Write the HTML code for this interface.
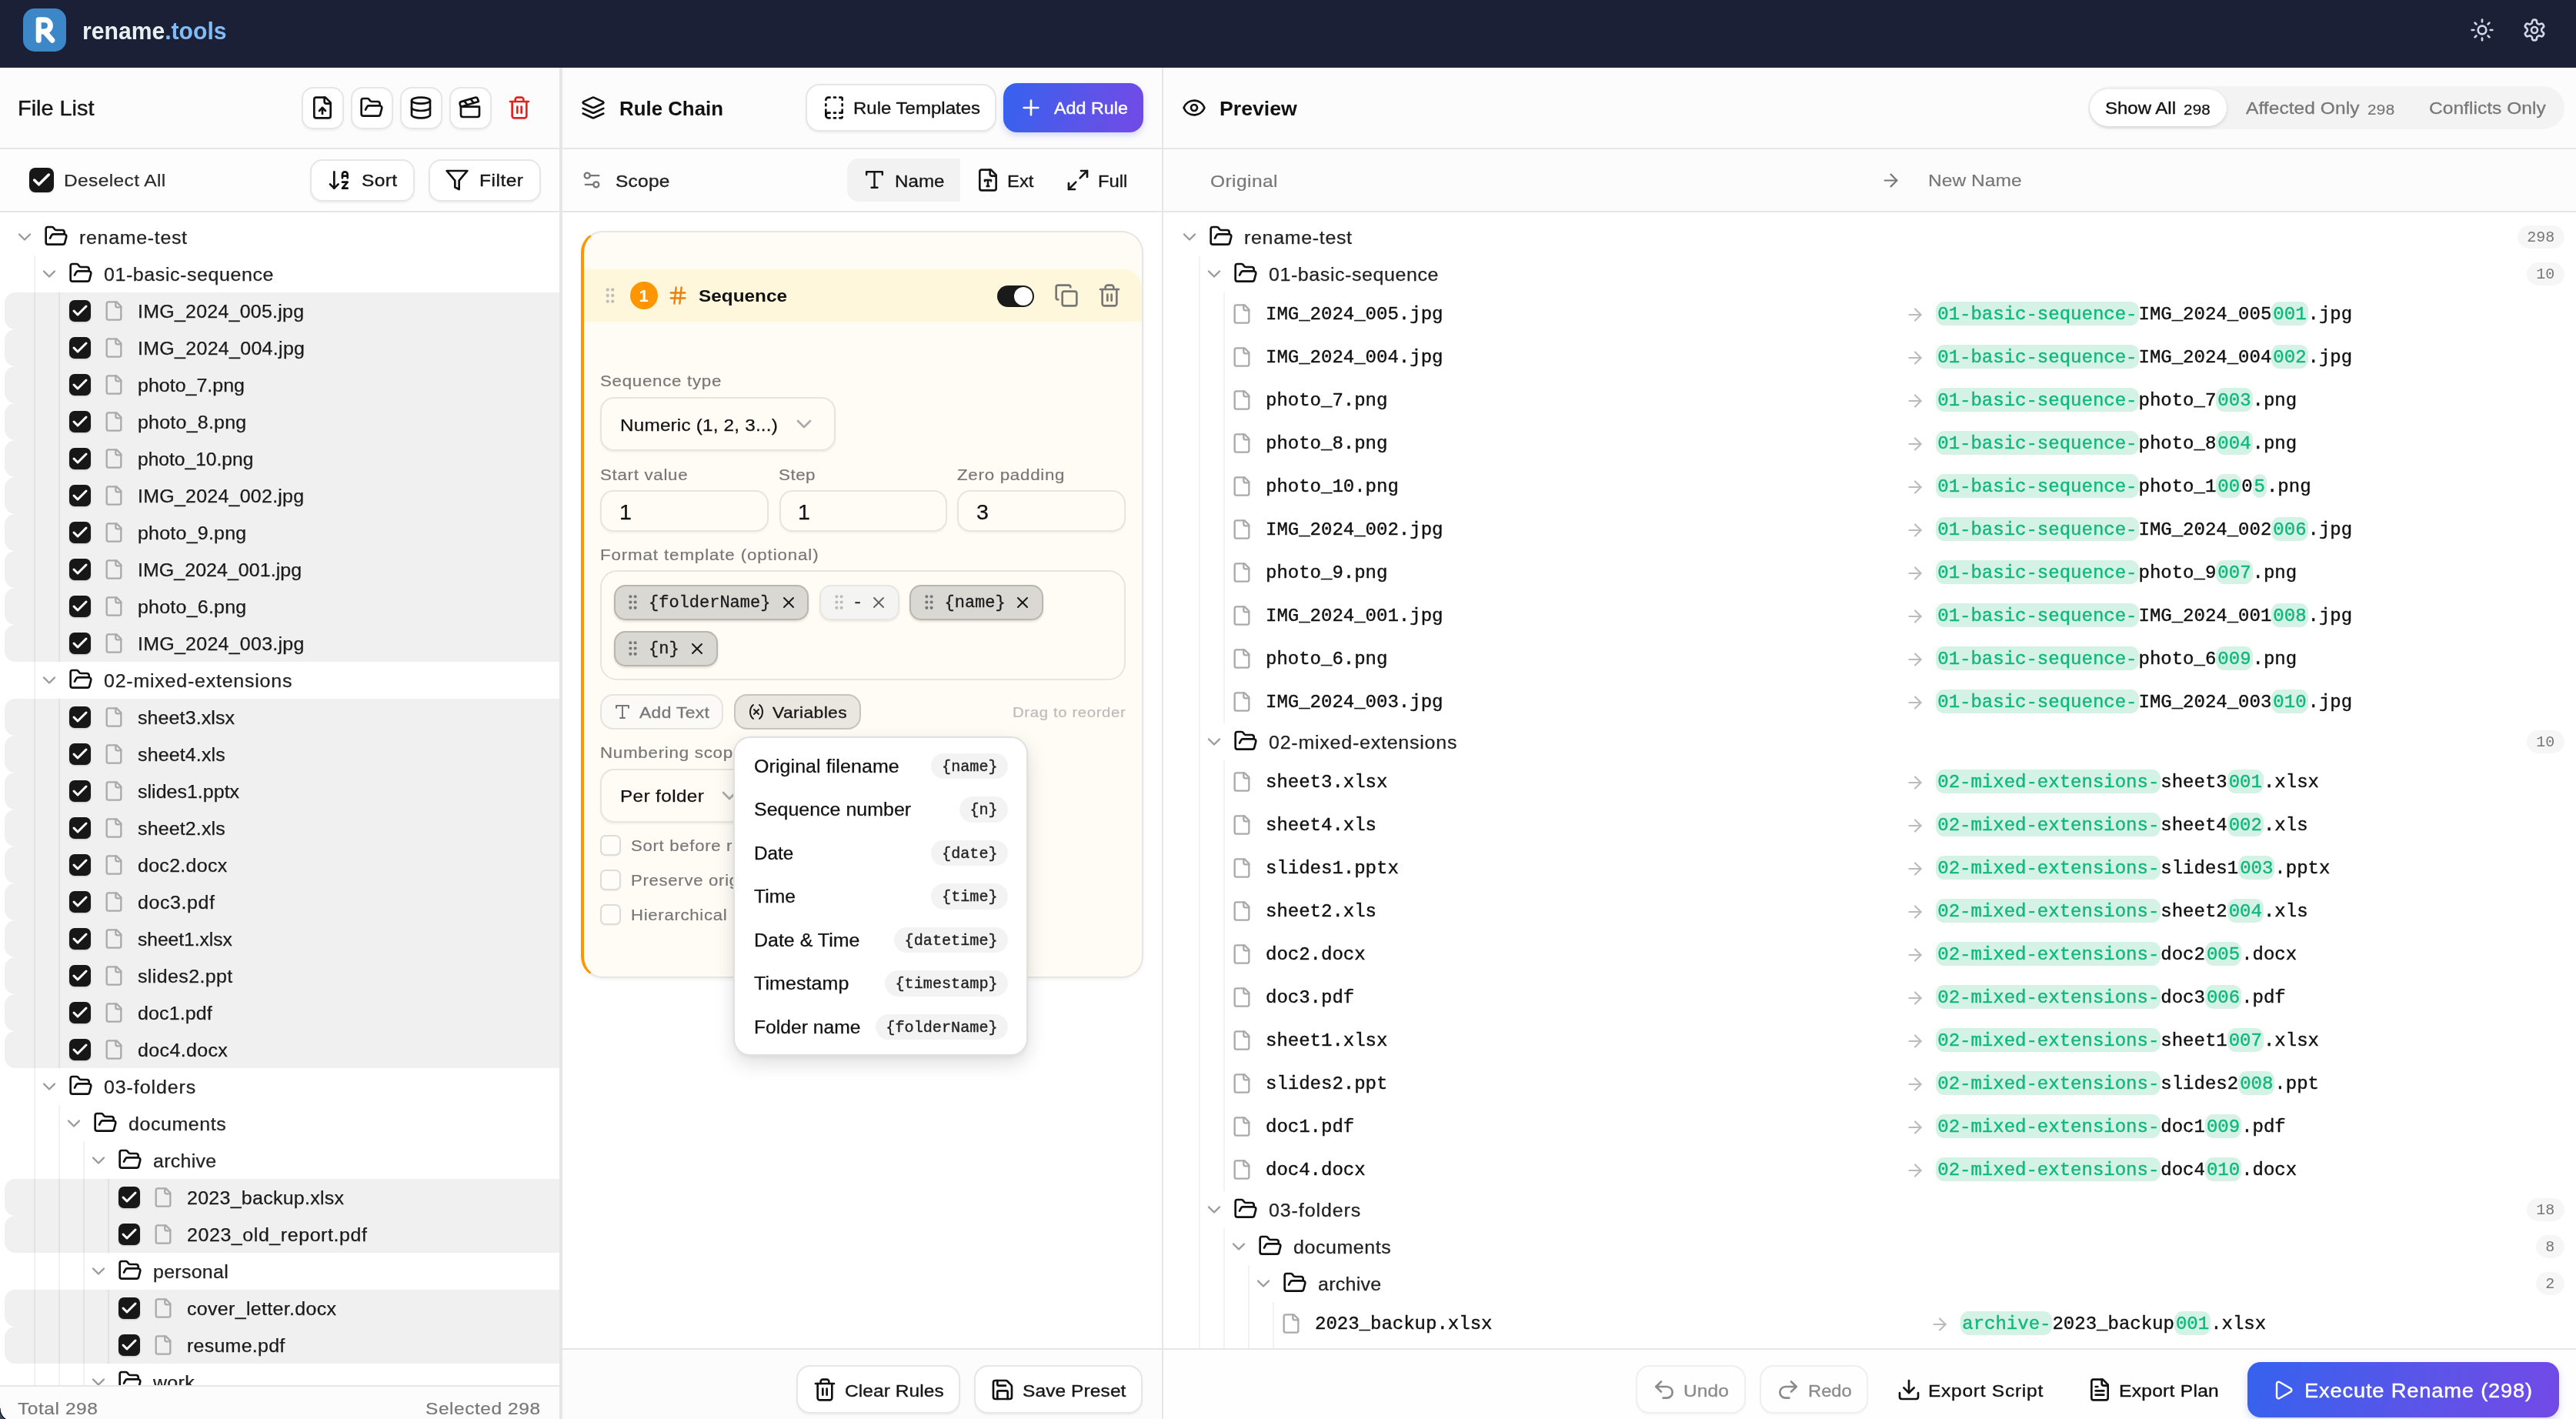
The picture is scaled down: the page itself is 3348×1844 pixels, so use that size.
<!DOCTYPE html>
<html><head><meta charset="utf-8"><title>rename.tools</title><style>
*{box-sizing:border-box}
html,body{margin:0;padding:0}
body{width:3348px;height:1844px;overflow:hidden;background:#fff;position:relative;font-family:"Liberation Sans",sans-serif;color:#1a1a1a}
div{position:absolute}
.t,.m{position:absolute;white-space:pre;line-height:1;transform-origin:0 0}
.t{font-family:"Liberation Sans",sans-serif}
.m{font-family:"Liberation Mono",monospace}
.i{position:absolute;fill:none;stroke:currentColor;stroke-linecap:round;stroke-linejoin:round;overflow:visible}
#root{left:0;top:0;width:3348px;height:1844px;overflow:hidden;will-change:transform}
.clip{overflow:hidden}
.g{color:#10b77f;background:#d4f2e5;border-radius:11px;padding:3px 2px 1.5px}
</style></head><body><div id="root"><div style="left:0.00px;top:0.00px;width:3348.00px;height:88.00px;background:#1c2037;border-bottom:1px solid #232a44"></div><div style="left:30.00px;top:11.00px;width:56.00px;height:56.00px;background:#3b87c7;border-radius:15px"><svg width="56" height="56" viewBox="0 0 56 56" style="position:absolute;left:0;top:0" fill="none" stroke="#fff" stroke-width="7" stroke-linecap="round" stroke-linejoin="round"><path d="M20.2 41.3V14.7h7.6a7.6 7.6 0 0 1 0 15.2h-7.6"/><path d="M28.5 30.6l9.3 10.7"/></svg></div><span class="t" style="left:107.3px;top:24.41px;font-size:32px;font-weight:700;transform:scaleX(0.9414);color:#e8f1ef">rename<span style="color:#7fbcf8">.tools</span></span><svg class="i" style="left:3210.00px;top:23.00px;color:#cfd8e6;" width="32" height="32" viewBox="0 0 24 24" stroke-width="2"><circle cx="12" cy="12" r="4"/><path d="M12 2v2"/><path d="M12 20v2"/><path d="m4.93 4.93 1.41 1.41"/><path d="m17.66 17.66 1.41 1.41"/><path d="M2 12h2"/><path d="M20 12h2"/><path d="m6.34 17.66-1.41 1.41"/><path d="m19.07 4.93-1.41 1.41"/></svg><svg class="i" style="left:3278.00px;top:23.00px;color:#cfd8e6;" width="32" height="32" viewBox="0 0 24 24" stroke-width="2"><path d="M12.22 2h-.44a2 2 0 0 0-2 2v.18a2 2 0 0 1-1 1.73l-.43.25a2 2 0 0 1-2 0l-.15-.08a2 2 0 0 0-2.73.73l-.22.38a2 2 0 0 0 .73 2.73l.15.1a2 2 0 0 1 1 1.72v.51a2 2 0 0 1-1 1.74l-.15.09a2 2 0 0 0-.73 2.73l.22.38a2 2 0 0 0 2.73.73l.15-.08a2 2 0 0 1 2 0l.43.25a2 2 0 0 1 1 1.73V20a2 2 0 0 0 2 2h.44a2 2 0 0 0 2-2v-.18a2 2 0 0 1 1-1.73l.43-.25a2 2 0 0 1 2 0l.15.08a2 2 0 0 0 2.73-.73l.22-.39a2 2 0 0 0-.73-2.73l-.15-.08a2 2 0 0 1-1-1.74v-.5a2 2 0 0 1 1-1.74l.15-.09a2 2 0 0 0 .73-2.73l-.22-.38a2 2 0 0 0-2.73-.73l-.15.08a2 2 0 0 1-2 0l-.43-.25a2 2 0 0 1-1-1.73V4a2 2 0 0 0-2-2z"/><circle cx="12" cy="12" r="3"/></svg>
<div style="left:0.00px;top:88.00px;width:727.00px;height:104.00px;background:#fcfcfc"></div><div style="left:0.00px;top:192.00px;width:727.00px;height:2.00px;background:#e6e6e6"></div><span class="t" style="left:23.00px;top:128.06px;font-size:26.75px;color:#161616;transform:scaleX(1.0796);-webkit-text-stroke:0.4px #161616;">File List</span><div style="left:391.50px;top:112.50px;width:55.00px;height:55.00px;background:#fff;border:2px solid #e6e6e6;border-radius:15px;box-shadow:0 2px 3px rgba(0,0,0,.05)"></div><svg class="i" style="left:403.00px;top:124.00px;color:#111;" width="32" height="32" viewBox="0 0 24 24" stroke-width="2"><path d="M15 2H6a2 2 0 0 0-2 2v16a2 2 0 0 0 2 2h12a2 2 0 0 0 2-2V7Z"/><path d="M14 2v4a2 2 0 0 0 2 2h4"/><path d="M12 12v6"/><path d="m15 15-3-3-3 3"/></svg><div style="left:455.50px;top:112.50px;width:55.00px;height:55.00px;background:#fff;border:2px solid #e6e6e6;border-radius:15px;box-shadow:0 2px 3px rgba(0,0,0,.05)"></div><svg class="i" style="left:467.00px;top:124.00px;color:#111;" width="32" height="32" viewBox="0 0 24 24" stroke-width="2"><path d="m6 14 1.5-2.9A2 2 0 0 1 9.24 10H20a2 2 0 0 1 1.94 2.5l-1.54 6a2 2 0 0 1-1.95 1.5H4a2 2 0 0 1-2-2V5a2 2 0 0 1 2-2h3.9a2 2 0 0 1 1.69.9l.81 1.2a2 2 0 0 0 1.67.9H18a2 2 0 0 1 2 2v2"/></svg><div style="left:519.50px;top:112.50px;width:55.00px;height:55.00px;background:#fff;border:2px solid #e6e6e6;border-radius:15px;box-shadow:0 2px 3px rgba(0,0,0,.05)"></div><svg class="i" style="left:531.00px;top:124.00px;color:#111;" width="32" height="32" viewBox="0 0 24 24" stroke-width="2"><ellipse cx="12" cy="5" rx="9" ry="3"/><path d="M3 5V19A9 3 0 0 0 21 19V5"/><path d="M3 12A9 3 0 0 0 21 12"/></svg><div style="left:583.50px;top:112.50px;width:55.00px;height:55.00px;background:#fff;border:2px solid #e6e6e6;border-radius:15px;box-shadow:0 2px 3px rgba(0,0,0,.05)"></div><svg class="i" style="left:595.00px;top:124.00px;color:#111;" width="32" height="32" viewBox="0 0 24 24" stroke-width="2"><path d="M20.2 6 3 11l-.9-2.4c-.3-1.1.3-2.2 1.3-2.5l13.5-4c1.1-.3 2.2.3 2.5 1.3Z"/><path d="m6.2 5.3 3.1 3.9"/><path d="m12.4 3.4 3.1 4"/><path d="M3 11h18v8a2 2 0 0 1-2 2H5a2 2 0 0 1-2-2Z"/></svg><svg class="i" style="left:659.00px;top:124.00px;color:#e2231f;" width="32" height="32" viewBox="0 0 24 24" stroke-width="2"><path d="M3 6h18"/><path d="M19 6v14c0 1-1 2-2 2H7c-1 0-2-1-2-2V6"/><path d="M8 6V4c0-1 1-2 2-2h4c1 0 2 1 2 2v2"/><path d="M10 11v6"/><path d="M14 11v6"/></svg><div style="left:0.00px;top:194.00px;width:727.00px;height:80.00px;background:#fdfdfd"></div><div style="left:0.00px;top:274.00px;width:727.00px;height:2.00px;background:#e6e6e6"></div><div style="left:38.00px;top:218.00px;width:32.00px;height:32.00px;background:#171717;border-radius:8px;box-shadow:0 1px 2px rgba(0,0,0,.15)"></div><svg class="i" style="left:40.00px;top:220.00px;color:#fff;" width="28" height="28" viewBox="0 0 24 24" stroke-width="3"><path d="M20 6 9 17l-5-5"/></svg><span class="t" style="left:82.50px;top:224.45px;font-size:22.5px;color:#2c2c2c;letter-spacing:0.334px;transform:scaleX(1.0900);-webkit-text-stroke:0.25px #2c2c2c;">Deselect All</span><div style="left:402.50px;top:206.50px;width:136.00px;height:55.00px;background:#fff;border:2px solid #e6e6e6;border-radius:16px;box-shadow:0 2px 3px rgba(0,0,0,.05)"></div><svg class="i" style="left:424.80px;top:218.00px;color:#111;" width="32" height="32" viewBox="0 0 24 24" stroke-width="2"><path d="m3 16 4 4 4-4"/><path d="M7 20V4"/><path d="M20 8h-5"/><path d="M15 10V6.5a2.5 2.5 0 0 1 5 0V10"/><path d="M15 14h5l-5 6h5"/></svg><span class="t" style="left:470.00px;top:224.45px;font-size:22.5px;color:#161616;letter-spacing:0.349px;transform:scaleX(1.0900);-webkit-text-stroke:0.35px #161616;">Sort</span><div style="left:556.50px;top:206.50px;width:146.00px;height:55.00px;background:#fff;border:2px solid #e6e6e6;border-radius:16px;box-shadow:0 2px 3px rgba(0,0,0,.05)"></div><svg class="i" style="left:577.70px;top:218.00px;color:#111;" width="32" height="32" viewBox="0 0 24 24" stroke-width="2"><polygon points="22 3 2 3 10 12.46 10 19 14 21 14 12.46 22 3"/></svg><span class="t" style="left:623.00px;top:224.45px;font-size:22.5px;color:#161616;letter-spacing:0.459px;transform:scaleX(1.0900);-webkit-text-stroke:0.35px #161616;">Filter</span><div class="clip" style="left:0.00px;top:276.00px;width:727.00px;height:1524.00px;"><div style="left:6.00px;top:104.00px;width:721.00px;height:48.00px;background:#f0f0f0;border-radius:14px 0 0 14px"></div><div style="left:6.00px;top:152.00px;width:721.00px;height:48.00px;background:#f0f0f0;border-radius:14px 0 0 14px"></div><div style="left:6.00px;top:200.00px;width:721.00px;height:48.00px;background:#f0f0f0;border-radius:14px 0 0 14px"></div><div style="left:6.00px;top:248.00px;width:721.00px;height:48.00px;background:#f0f0f0;border-radius:14px 0 0 14px"></div><div style="left:6.00px;top:296.00px;width:721.00px;height:48.00px;background:#f0f0f0;border-radius:14px 0 0 14px"></div><div style="left:6.00px;top:344.00px;width:721.00px;height:48.00px;background:#f0f0f0;border-radius:14px 0 0 14px"></div><div style="left:6.00px;top:392.00px;width:721.00px;height:48.00px;background:#f0f0f0;border-radius:14px 0 0 14px"></div><div style="left:6.00px;top:440.00px;width:721.00px;height:48.00px;background:#f0f0f0;border-radius:14px 0 0 14px"></div><div style="left:6.00px;top:488.00px;width:721.00px;height:48.00px;background:#f0f0f0;border-radius:14px 0 0 14px"></div><div style="left:6.00px;top:536.00px;width:721.00px;height:48.00px;background:#f0f0f0;border-radius:14px 0 0 14px"></div><div style="left:6.00px;top:632.00px;width:721.00px;height:48.00px;background:#f0f0f0;border-radius:14px 0 0 14px"></div><div style="left:6.00px;top:680.00px;width:721.00px;height:48.00px;background:#f0f0f0;border-radius:14px 0 0 14px"></div><div style="left:6.00px;top:728.00px;width:721.00px;height:48.00px;background:#f0f0f0;border-radius:14px 0 0 14px"></div><div style="left:6.00px;top:776.00px;width:721.00px;height:48.00px;background:#f0f0f0;border-radius:14px 0 0 14px"></div><div style="left:6.00px;top:824.00px;width:721.00px;height:48.00px;background:#f0f0f0;border-radius:14px 0 0 14px"></div><div style="left:6.00px;top:872.00px;width:721.00px;height:48.00px;background:#f0f0f0;border-radius:14px 0 0 14px"></div><div style="left:6.00px;top:920.00px;width:721.00px;height:48.00px;background:#f0f0f0;border-radius:14px 0 0 14px"></div><div style="left:6.00px;top:968.00px;width:721.00px;height:48.00px;background:#f0f0f0;border-radius:14px 0 0 14px"></div><div style="left:6.00px;top:1016.00px;width:721.00px;height:48.00px;background:#f0f0f0;border-radius:14px 0 0 14px"></div><div style="left:6.00px;top:1064.00px;width:721.00px;height:48.00px;background:#f0f0f0;border-radius:14px 0 0 14px"></div><div style="left:6.00px;top:1256.00px;width:721.00px;height:48.00px;background:#f0f0f0;border-radius:14px 0 0 14px"></div><div style="left:6.00px;top:1304.00px;width:721.00px;height:48.00px;background:#f0f0f0;border-radius:14px 0 0 14px"></div><div style="left:6.00px;top:1400.00px;width:721.00px;height:48.00px;background:#f0f0f0;border-radius:14px 0 0 14px"></div><div style="left:6.00px;top:1448.00px;width:721.00px;height:48.00px;background:#f0f0f0;border-radius:14px 0 0 14px"></div><div style="left:44.00px;top:56.00px;width:2.00px;height:1488.00px;background:rgba(0,0,0,.055)"></div><div style="left:76.00px;top:104.00px;width:2.00px;height:480.00px;background:rgba(0,0,0,.055)"></div><div style="left:76.00px;top:632.00px;width:2.00px;height:480.00px;background:rgba(0,0,0,.055)"></div><div style="left:76.00px;top:1160.00px;width:2.00px;height:384.00px;background:rgba(0,0,0,.055)"></div><div style="left:108.00px;top:1208.00px;width:2.00px;height:336.00px;background:rgba(0,0,0,.055)"></div><div style="left:140.00px;top:1256.00px;width:2.00px;height:96.00px;background:rgba(0,0,0,.055)"></div><div style="left:140.00px;top:1400.00px;width:2.00px;height:96.00px;background:rgba(0,0,0,.055)"></div><svg class="i" style="left:18.00px;top:18.00px;color:#999;" width="28" height="28" viewBox="0 0 24 24" stroke-width="2"><path d="m6 9 6 6 6-6"/></svg><svg class="i" style="left:57.40px;top:15.40px;color:#111;" width="32" height="32" viewBox="0 0 24 24" stroke-width="2"><path d="m6 14 1.5-2.9A2 2 0 0 1 9.24 10H20a2 2 0 0 1 1.94 2.5l-1.54 6a2 2 0 0 1-1.95 1.5H4a2 2 0 0 1-2-2V5a2 2 0 0 1 2-2h3.9a2 2 0 0 1 1.69.9l.81 1.2a2 2 0 0 0 1.67.9H18a2 2 0 0 1 2 2v2"/></svg><span class="t" style="left:103.00px;top:21.63px;font-size:23px;color:#222;letter-spacing:0.637px;transform:scaleX(1.0850);-webkit-text-stroke:0.25px #222;">rename-test</span><svg class="i" style="left:50.00px;top:66.00px;color:#999;" width="28" height="28" viewBox="0 0 24 24" stroke-width="2"><path d="m6 9 6 6 6-6"/></svg><svg class="i" style="left:89.40px;top:63.40px;color:#111;" width="32" height="32" viewBox="0 0 24 24" stroke-width="2"><path d="m6 14 1.5-2.9A2 2 0 0 1 9.24 10H20a2 2 0 0 1 1.94 2.5l-1.54 6a2 2 0 0 1-1.95 1.5H4a2 2 0 0 1-2-2V5a2 2 0 0 1 2-2h3.9a2 2 0 0 1 1.69.9l.81 1.2a2 2 0 0 0 1.67.9H18a2 2 0 0 1 2 2v2"/></svg><span class="t" style="left:135.00px;top:69.63px;font-size:23px;color:#222;letter-spacing:0.549px;transform:scaleX(1.0850);-webkit-text-stroke:0.25px #222;">01-basic-sequence</span><div style="left:90.00px;top:114.00px;width:28.00px;height:28.00px;background:#171717;border-radius:7px;box-shadow:0 1px 2px rgba(0,0,0,.2)"></div><svg class="i" style="left:92.00px;top:116.00px;color:#fff;" width="24" height="24" viewBox="0 0 24 24" stroke-width="3"><path d="M20 6 9 17l-5-5"/></svg><svg class="i" style="left:134.00px;top:114.00px;color:#aaa;" width="28" height="28" viewBox="0 0 24 24" stroke-width="2"><path d="M15 2H6a2 2 0 0 0-2 2v16a2 2 0 0 0 2 2h12a2 2 0 0 0 2-2V7Z"/><path d="M14 2v4a2 2 0 0 0 2 2h4"/></svg><span class="t" style="left:178.50px;top:117.63px;font-size:23px;color:#1a1a1a;letter-spacing:0.231px;transform:scaleX(1.0850);-webkit-text-stroke:0.25px #1a1a1a;">IMG_2024_005.jpg</span><div style="left:90.00px;top:162.00px;width:28.00px;height:28.00px;background:#171717;border-radius:7px;box-shadow:0 1px 2px rgba(0,0,0,.2)"></div><svg class="i" style="left:92.00px;top:164.00px;color:#fff;" width="24" height="24" viewBox="0 0 24 24" stroke-width="3"><path d="M20 6 9 17l-5-5"/></svg><svg class="i" style="left:134.00px;top:162.00px;color:#aaa;" width="28" height="28" viewBox="0 0 24 24" stroke-width="2"><path d="M15 2H6a2 2 0 0 0-2 2v16a2 2 0 0 0 2 2h12a2 2 0 0 0 2-2V7Z"/><path d="M14 2v4a2 2 0 0 0 2 2h4"/></svg><span class="t" style="left:178.50px;top:165.63px;font-size:23px;color:#1a1a1a;letter-spacing:0.289px;transform:scaleX(1.0850);-webkit-text-stroke:0.25px #1a1a1a;">IMG_2024_004.jpg</span><div style="left:90.00px;top:210.00px;width:28.00px;height:28.00px;background:#171717;border-radius:7px;box-shadow:0 1px 2px rgba(0,0,0,.2)"></div><svg class="i" style="left:92.00px;top:212.00px;color:#fff;" width="24" height="24" viewBox="0 0 24 24" stroke-width="3"><path d="M20 6 9 17l-5-5"/></svg><svg class="i" style="left:134.00px;top:210.00px;color:#aaa;" width="28" height="28" viewBox="0 0 24 24" stroke-width="2"><path d="M15 2H6a2 2 0 0 0-2 2v16a2 2 0 0 0 2 2h12a2 2 0 0 0 2-2V7Z"/><path d="M14 2v4a2 2 0 0 0 2 2h4"/></svg><span class="t" style="left:178.50px;top:213.63px;font-size:23px;color:#1a1a1a;letter-spacing:0.019px;transform:scaleX(1.0850);-webkit-text-stroke:0.25px #1a1a1a;">photo_7.png</span><div style="left:90.00px;top:258.00px;width:28.00px;height:28.00px;background:#171717;border-radius:7px;box-shadow:0 1px 2px rgba(0,0,0,.2)"></div><svg class="i" style="left:92.00px;top:260.00px;color:#fff;" width="24" height="24" viewBox="0 0 24 24" stroke-width="3"><path d="M20 6 9 17l-5-5"/></svg><svg class="i" style="left:134.00px;top:258.00px;color:#aaa;" width="28" height="28" viewBox="0 0 24 24" stroke-width="2"><path d="M15 2H6a2 2 0 0 0-2 2v16a2 2 0 0 0 2 2h12a2 2 0 0 0 2-2V7Z"/><path d="M14 2v4a2 2 0 0 0 2 2h4"/></svg><span class="t" style="left:178.50px;top:261.63px;font-size:23px;color:#1a1a1a;letter-spacing:0.220px;transform:scaleX(1.0850);-webkit-text-stroke:0.25px #1a1a1a;">photo_8.png</span><div style="left:90.00px;top:306.00px;width:28.00px;height:28.00px;background:#171717;border-radius:7px;box-shadow:0 1px 2px rgba(0,0,0,.2)"></div><svg class="i" style="left:92.00px;top:308.00px;color:#fff;" width="24" height="24" viewBox="0 0 24 24" stroke-width="3"><path d="M20 6 9 17l-5-5"/></svg><svg class="i" style="left:134.00px;top:306.00px;color:#aaa;" width="28" height="28" viewBox="0 0 24 24" stroke-width="2"><path d="M15 2H6a2 2 0 0 0-2 2v16a2 2 0 0 0 2 2h12a2 2 0 0 0 2-2V7Z"/><path d="M14 2v4a2 2 0 0 0 2 2h4"/></svg><span class="t" style="left:178.50px;top:309.63px;font-size:23px;color:#1a1a1a;transform:scaleX(1.0689);-webkit-text-stroke:0.25px #1a1a1a;">photo_10.png</span><div style="left:90.00px;top:354.00px;width:28.00px;height:28.00px;background:#171717;border-radius:7px;box-shadow:0 1px 2px rgba(0,0,0,.2)"></div><svg class="i" style="left:92.00px;top:356.00px;color:#fff;" width="24" height="24" viewBox="0 0 24 24" stroke-width="3"><path d="M20 6 9 17l-5-5"/></svg><svg class="i" style="left:134.00px;top:354.00px;color:#aaa;" width="28" height="28" viewBox="0 0 24 24" stroke-width="2"><path d="M15 2H6a2 2 0 0 0-2 2v16a2 2 0 0 0 2 2h12a2 2 0 0 0 2-2V7Z"/><path d="M14 2v4a2 2 0 0 0 2 2h4"/></svg><span class="t" style="left:178.50px;top:357.63px;font-size:23px;color:#1a1a1a;letter-spacing:0.237px;transform:scaleX(1.0850);-webkit-text-stroke:0.25px #1a1a1a;">IMG_2024_002.jpg</span><div style="left:90.00px;top:402.00px;width:28.00px;height:28.00px;background:#171717;border-radius:7px;box-shadow:0 1px 2px rgba(0,0,0,.2)"></div><svg class="i" style="left:92.00px;top:404.00px;color:#fff;" width="24" height="24" viewBox="0 0 24 24" stroke-width="3"><path d="M20 6 9 17l-5-5"/></svg><svg class="i" style="left:134.00px;top:402.00px;color:#aaa;" width="28" height="28" viewBox="0 0 24 24" stroke-width="2"><path d="M15 2H6a2 2 0 0 0-2 2v16a2 2 0 0 0 2 2h12a2 2 0 0 0 2-2V7Z"/><path d="M14 2v4a2 2 0 0 0 2 2h4"/></svg><span class="t" style="left:178.50px;top:405.63px;font-size:23px;color:#1a1a1a;letter-spacing:0.220px;transform:scaleX(1.0850);-webkit-text-stroke:0.25px #1a1a1a;">photo_9.png</span><div style="left:90.00px;top:450.00px;width:28.00px;height:28.00px;background:#171717;border-radius:7px;box-shadow:0 1px 2px rgba(0,0,0,.2)"></div><svg class="i" style="left:92.00px;top:452.00px;color:#fff;" width="24" height="24" viewBox="0 0 24 24" stroke-width="3"><path d="M20 6 9 17l-5-5"/></svg><svg class="i" style="left:134.00px;top:450.00px;color:#aaa;" width="28" height="28" viewBox="0 0 24 24" stroke-width="2"><path d="M15 2H6a2 2 0 0 0-2 2v16a2 2 0 0 0 2 2h12a2 2 0 0 0 2-2V7Z"/><path d="M14 2v4a2 2 0 0 0 2 2h4"/></svg><span class="t" style="left:178.50px;top:453.63px;font-size:23px;color:#1a1a1a;letter-spacing:0.047px;transform:scaleX(1.0850);-webkit-text-stroke:0.25px #1a1a1a;">IMG_2024_001.jpg</span><div style="left:90.00px;top:498.00px;width:28.00px;height:28.00px;background:#171717;border-radius:7px;box-shadow:0 1px 2px rgba(0,0,0,.2)"></div><svg class="i" style="left:92.00px;top:500.00px;color:#fff;" width="24" height="24" viewBox="0 0 24 24" stroke-width="3"><path d="M20 6 9 17l-5-5"/></svg><svg class="i" style="left:134.00px;top:498.00px;color:#aaa;" width="28" height="28" viewBox="0 0 24 24" stroke-width="2"><path d="M15 2H6a2 2 0 0 0-2 2v16a2 2 0 0 0 2 2h12a2 2 0 0 0 2-2V7Z"/><path d="M14 2v4a2 2 0 0 0 2 2h4"/></svg><span class="t" style="left:178.50px;top:501.63px;font-size:23px;color:#1a1a1a;letter-spacing:0.220px;transform:scaleX(1.0850);-webkit-text-stroke:0.25px #1a1a1a;">photo_6.png</span><div style="left:90.00px;top:546.00px;width:28.00px;height:28.00px;background:#171717;border-radius:7px;box-shadow:0 1px 2px rgba(0,0,0,.2)"></div><svg class="i" style="left:92.00px;top:548.00px;color:#fff;" width="24" height="24" viewBox="0 0 24 24" stroke-width="3"><path d="M20 6 9 17l-5-5"/></svg><svg class="i" style="left:134.00px;top:546.00px;color:#aaa;" width="28" height="28" viewBox="0 0 24 24" stroke-width="2"><path d="M15 2H6a2 2 0 0 0-2 2v16a2 2 0 0 0 2 2h12a2 2 0 0 0 2-2V7Z"/><path d="M14 2v4a2 2 0 0 0 2 2h4"/></svg><span class="t" style="left:178.50px;top:549.63px;font-size:23px;color:#1a1a1a;letter-spacing:0.249px;transform:scaleX(1.0850);-webkit-text-stroke:0.25px #1a1a1a;">IMG_2024_003.jpg</span><svg class="i" style="left:50.00px;top:594.00px;color:#999;" width="28" height="28" viewBox="0 0 24 24" stroke-width="2"><path d="m6 9 6 6 6-6"/></svg><svg class="i" style="left:89.40px;top:591.40px;color:#111;" width="32" height="32" viewBox="0 0 24 24" stroke-width="2"><path d="m6 14 1.5-2.9A2 2 0 0 1 9.24 10H20a2 2 0 0 1 1.94 2.5l-1.54 6a2 2 0 0 1-1.95 1.5H4a2 2 0 0 1-2-2V5a2 2 0 0 1 2-2h3.9a2 2 0 0 1 1.69.9l.81 1.2a2 2 0 0 0 1.67.9H18a2 2 0 0 1 2 2v2"/></svg><span class="t" style="left:135.00px;top:597.63px;font-size:23px;color:#222;letter-spacing:0.725px;transform:scaleX(1.0850);-webkit-text-stroke:0.25px #222;">02-mixed-extensions</span><div style="left:90.00px;top:642.00px;width:28.00px;height:28.00px;background:#171717;border-radius:7px;box-shadow:0 1px 2px rgba(0,0,0,.2)"></div><svg class="i" style="left:92.00px;top:644.00px;color:#fff;" width="24" height="24" viewBox="0 0 24 24" stroke-width="3"><path d="M20 6 9 17l-5-5"/></svg><svg class="i" style="left:134.00px;top:642.00px;color:#aaa;" width="28" height="28" viewBox="0 0 24 24" stroke-width="2"><path d="M15 2H6a2 2 0 0 0-2 2v16a2 2 0 0 0 2 2h12a2 2 0 0 0 2-2V7Z"/><path d="M14 2v4a2 2 0 0 0 2 2h4"/></svg><span class="t" style="left:178.50px;top:645.63px;font-size:23px;color:#1a1a1a;letter-spacing:0.114px;transform:scaleX(1.0850);-webkit-text-stroke:0.25px #1a1a1a;">sheet3.xlsx</span><div style="left:90.00px;top:690.00px;width:28.00px;height:28.00px;background:#171717;border-radius:7px;box-shadow:0 1px 2px rgba(0,0,0,.2)"></div><svg class="i" style="left:92.00px;top:692.00px;color:#fff;" width="24" height="24" viewBox="0 0 24 24" stroke-width="3"><path d="M20 6 9 17l-5-5"/></svg><svg class="i" style="left:134.00px;top:690.00px;color:#aaa;" width="28" height="28" viewBox="0 0 24 24" stroke-width="2"><path d="M15 2H6a2 2 0 0 0-2 2v16a2 2 0 0 0 2 2h12a2 2 0 0 0 2-2V7Z"/><path d="M14 2v4a2 2 0 0 0 2 2h4"/></svg><span class="t" style="left:178.50px;top:693.63px;font-size:23px;color:#1a1a1a;letter-spacing:0.142px;transform:scaleX(1.0850);-webkit-text-stroke:0.25px #1a1a1a;">sheet4.xls</span><div style="left:90.00px;top:738.00px;width:28.00px;height:28.00px;background:#171717;border-radius:7px;box-shadow:0 1px 2px rgba(0,0,0,.2)"></div><svg class="i" style="left:92.00px;top:740.00px;color:#fff;" width="24" height="24" viewBox="0 0 24 24" stroke-width="3"><path d="M20 6 9 17l-5-5"/></svg><svg class="i" style="left:134.00px;top:738.00px;color:#aaa;" width="28" height="28" viewBox="0 0 24 24" stroke-width="2"><path d="M15 2H6a2 2 0 0 0-2 2v16a2 2 0 0 0 2 2h12a2 2 0 0 0 2-2V7Z"/><path d="M14 2v4a2 2 0 0 0 2 2h4"/></svg><span class="t" style="left:178.50px;top:741.63px;font-size:23px;color:#1a1a1a;letter-spacing:0.024px;transform:scaleX(1.0850);-webkit-text-stroke:0.25px #1a1a1a;">slides1.pptx</span><div style="left:90.00px;top:786.00px;width:28.00px;height:28.00px;background:#171717;border-radius:7px;box-shadow:0 1px 2px rgba(0,0,0,.2)"></div><svg class="i" style="left:92.00px;top:788.00px;color:#fff;" width="24" height="24" viewBox="0 0 24 24" stroke-width="3"><path d="M20 6 9 17l-5-5"/></svg><svg class="i" style="left:134.00px;top:786.00px;color:#aaa;" width="28" height="28" viewBox="0 0 24 24" stroke-width="2"><path d="M15 2H6a2 2 0 0 0-2 2v16a2 2 0 0 0 2 2h12a2 2 0 0 0 2-2V7Z"/><path d="M14 2v4a2 2 0 0 0 2 2h4"/></svg><span class="t" style="left:178.50px;top:789.63px;font-size:23px;color:#1a1a1a;letter-spacing:0.142px;transform:scaleX(1.0850);-webkit-text-stroke:0.25px #1a1a1a;">sheet2.xls</span><div style="left:90.00px;top:834.00px;width:28.00px;height:28.00px;background:#171717;border-radius:7px;box-shadow:0 1px 2px rgba(0,0,0,.2)"></div><svg class="i" style="left:92.00px;top:836.00px;color:#fff;" width="24" height="24" viewBox="0 0 24 24" stroke-width="3"><path d="M20 6 9 17l-5-5"/></svg><svg class="i" style="left:134.00px;top:834.00px;color:#aaa;" width="28" height="28" viewBox="0 0 24 24" stroke-width="2"><path d="M15 2H6a2 2 0 0 0-2 2v16a2 2 0 0 0 2 2h12a2 2 0 0 0 2-2V7Z"/><path d="M14 2v4a2 2 0 0 0 2 2h4"/></svg><span class="t" style="left:178.50px;top:837.63px;font-size:23px;color:#1a1a1a;letter-spacing:0.280px;transform:scaleX(1.0850);-webkit-text-stroke:0.25px #1a1a1a;">doc2.docx</span><div style="left:90.00px;top:882.00px;width:28.00px;height:28.00px;background:#171717;border-radius:7px;box-shadow:0 1px 2px rgba(0,0,0,.2)"></div><svg class="i" style="left:92.00px;top:884.00px;color:#fff;" width="24" height="24" viewBox="0 0 24 24" stroke-width="3"><path d="M20 6 9 17l-5-5"/></svg><svg class="i" style="left:134.00px;top:882.00px;color:#aaa;" width="28" height="28" viewBox="0 0 24 24" stroke-width="2"><path d="M15 2H6a2 2 0 0 0-2 2v16a2 2 0 0 0 2 2h12a2 2 0 0 0 2-2V7Z"/><path d="M14 2v4a2 2 0 0 0 2 2h4"/></svg><span class="t" style="left:178.50px;top:885.63px;font-size:23px;color:#1a1a1a;letter-spacing:0.548px;transform:scaleX(1.0850);-webkit-text-stroke:0.25px #1a1a1a;">doc3.pdf</span><div style="left:90.00px;top:930.00px;width:28.00px;height:28.00px;background:#171717;border-radius:7px;box-shadow:0 1px 2px rgba(0,0,0,.2)"></div><svg class="i" style="left:92.00px;top:932.00px;color:#fff;" width="24" height="24" viewBox="0 0 24 24" stroke-width="3"><path d="M20 6 9 17l-5-5"/></svg><svg class="i" style="left:134.00px;top:930.00px;color:#aaa;" width="28" height="28" viewBox="0 0 24 24" stroke-width="2"><path d="M15 2H6a2 2 0 0 0-2 2v16a2 2 0 0 0 2 2h12a2 2 0 0 0 2-2V7Z"/><path d="M14 2v4a2 2 0 0 0 2 2h4"/></svg><span class="t" style="left:178.50px;top:933.63px;font-size:23px;color:#1a1a1a;transform:scaleX(1.0673);-webkit-text-stroke:0.25px #1a1a1a;">sheet1.xlsx</span><div style="left:90.00px;top:978.00px;width:28.00px;height:28.00px;background:#171717;border-radius:7px;box-shadow:0 1px 2px rgba(0,0,0,.2)"></div><svg class="i" style="left:92.00px;top:980.00px;color:#fff;" width="24" height="24" viewBox="0 0 24 24" stroke-width="3"><path d="M20 6 9 17l-5-5"/></svg><svg class="i" style="left:134.00px;top:978.00px;color:#aaa;" width="28" height="28" viewBox="0 0 24 24" stroke-width="2"><path d="M15 2H6a2 2 0 0 0-2 2v16a2 2 0 0 0 2 2h12a2 2 0 0 0 2-2V7Z"/><path d="M14 2v4a2 2 0 0 0 2 2h4"/></svg><span class="t" style="left:178.50px;top:981.63px;font-size:23px;color:#1a1a1a;letter-spacing:0.360px;transform:scaleX(1.0850);-webkit-text-stroke:0.25px #1a1a1a;">slides2.ppt</span><div style="left:90.00px;top:1026.00px;width:28.00px;height:28.00px;background:#171717;border-radius:7px;box-shadow:0 1px 2px rgba(0,0,0,.2)"></div><svg class="i" style="left:92.00px;top:1028.00px;color:#fff;" width="24" height="24" viewBox="0 0 24 24" stroke-width="3"><path d="M20 6 9 17l-5-5"/></svg><svg class="i" style="left:134.00px;top:1026.00px;color:#aaa;" width="28" height="28" viewBox="0 0 24 24" stroke-width="2"><path d="M15 2H6a2 2 0 0 0-2 2v16a2 2 0 0 0 2 2h12a2 2 0 0 0 2-2V7Z"/><path d="M14 2v4a2 2 0 0 0 2 2h4"/></svg><span class="t" style="left:178.50px;top:1029.63px;font-size:23px;color:#1a1a1a;letter-spacing:0.122px;transform:scaleX(1.0850);-webkit-text-stroke:0.25px #1a1a1a;">doc1.pdf</span><div style="left:90.00px;top:1074.00px;width:28.00px;height:28.00px;background:#171717;border-radius:7px;box-shadow:0 1px 2px rgba(0,0,0,.2)"></div><svg class="i" style="left:92.00px;top:1076.00px;color:#fff;" width="24" height="24" viewBox="0 0 24 24" stroke-width="3"><path d="M20 6 9 17l-5-5"/></svg><svg class="i" style="left:134.00px;top:1074.00px;color:#aaa;" width="28" height="28" viewBox="0 0 24 24" stroke-width="2"><path d="M15 2H6a2 2 0 0 0-2 2v16a2 2 0 0 0 2 2h12a2 2 0 0 0 2-2V7Z"/><path d="M14 2v4a2 2 0 0 0 2 2h4"/></svg><span class="t" style="left:178.50px;top:1077.63px;font-size:23px;color:#1a1a1a;letter-spacing:0.352px;transform:scaleX(1.0850);-webkit-text-stroke:0.25px #1a1a1a;">doc4.docx</span><svg class="i" style="left:50.00px;top:1122.00px;color:#999;" width="28" height="28" viewBox="0 0 24 24" stroke-width="2"><path d="m6 9 6 6 6-6"/></svg><svg class="i" style="left:89.40px;top:1119.40px;color:#111;" width="32" height="32" viewBox="0 0 24 24" stroke-width="2"><path d="m6 14 1.5-2.9A2 2 0 0 1 9.24 10H20a2 2 0 0 1 1.94 2.5l-1.54 6a2 2 0 0 1-1.95 1.5H4a2 2 0 0 1-2-2V5a2 2 0 0 1 2-2h3.9a2 2 0 0 1 1.69.9l.81 1.2a2 2 0 0 0 1.67.9H18a2 2 0 0 1 2 2v2"/></svg><span class="t" style="left:135.00px;top:1125.63px;font-size:23px;color:#222;letter-spacing:0.841px;transform:scaleX(1.0850);-webkit-text-stroke:0.25px #222;">03-folders</span><svg class="i" style="left:82.00px;top:1170.00px;color:#999;" width="28" height="28" viewBox="0 0 24 24" stroke-width="2"><path d="m6 9 6 6 6-6"/></svg><svg class="i" style="left:121.40px;top:1167.40px;color:#111;" width="32" height="32" viewBox="0 0 24 24" stroke-width="2"><path d="m6 14 1.5-2.9A2 2 0 0 1 9.24 10H20a2 2 0 0 1 1.94 2.5l-1.54 6a2 2 0 0 1-1.95 1.5H4a2 2 0 0 1-2-2V5a2 2 0 0 1 2-2h3.9a2 2 0 0 1 1.69.9l.81 1.2a2 2 0 0 0 1.67.9H18a2 2 0 0 1 2 2v2"/></svg><span class="t" style="left:167.00px;top:1173.63px;font-size:23px;color:#222;letter-spacing:0.525px;transform:scaleX(1.0850);-webkit-text-stroke:0.25px #222;">documents</span><svg class="i" style="left:114.00px;top:1218.00px;color:#999;" width="28" height="28" viewBox="0 0 24 24" stroke-width="2"><path d="m6 9 6 6 6-6"/></svg><svg class="i" style="left:153.40px;top:1215.40px;color:#111;" width="32" height="32" viewBox="0 0 24 24" stroke-width="2"><path d="m6 14 1.5-2.9A2 2 0 0 1 9.24 10H20a2 2 0 0 1 1.94 2.5l-1.54 6a2 2 0 0 1-1.95 1.5H4a2 2 0 0 1-2-2V5a2 2 0 0 1 2-2h3.9a2 2 0 0 1 1.69.9l.81 1.2a2 2 0 0 0 1.67.9H18a2 2 0 0 1 2 2v2"/></svg><span class="t" style="left:199.00px;top:1221.63px;font-size:23px;color:#222;letter-spacing:0.257px;transform:scaleX(1.0850);-webkit-text-stroke:0.25px #222;">archive</span><div style="left:154.00px;top:1266.00px;width:28.00px;height:28.00px;background:#171717;border-radius:7px;box-shadow:0 1px 2px rgba(0,0,0,.2)"></div><svg class="i" style="left:156.00px;top:1268.00px;color:#fff;" width="24" height="24" viewBox="0 0 24 24" stroke-width="3"><path d="M20 6 9 17l-5-5"/></svg><svg class="i" style="left:198.00px;top:1266.00px;color:#aaa;" width="28" height="28" viewBox="0 0 24 24" stroke-width="2"><path d="M15 2H6a2 2 0 0 0-2 2v16a2 2 0 0 0 2 2h12a2 2 0 0 0 2-2V7Z"/><path d="M14 2v4a2 2 0 0 0 2 2h4"/></svg><span class="t" style="left:242.50px;top:1269.63px;font-size:23px;color:#1a1a1a;letter-spacing:0.260px;transform:scaleX(1.0850);-webkit-text-stroke:0.25px #1a1a1a;">2023_backup.xlsx</span><div style="left:154.00px;top:1314.00px;width:28.00px;height:28.00px;background:#171717;border-radius:7px;box-shadow:0 1px 2px rgba(0,0,0,.2)"></div><svg class="i" style="left:156.00px;top:1316.00px;color:#fff;" width="24" height="24" viewBox="0 0 24 24" stroke-width="3"><path d="M20 6 9 17l-5-5"/></svg><svg class="i" style="left:198.00px;top:1314.00px;color:#aaa;" width="28" height="28" viewBox="0 0 24 24" stroke-width="2"><path d="M15 2H6a2 2 0 0 0-2 2v16a2 2 0 0 0 2 2h12a2 2 0 0 0 2-2V7Z"/><path d="M14 2v4a2 2 0 0 0 2 2h4"/></svg><span class="t" style="left:242.50px;top:1317.63px;font-size:23px;color:#1a1a1a;letter-spacing:0.539px;transform:scaleX(1.0850);-webkit-text-stroke:0.25px #1a1a1a;">2023_old_report.pdf</span><svg class="i" style="left:114.00px;top:1362.00px;color:#999;" width="28" height="28" viewBox="0 0 24 24" stroke-width="2"><path d="m6 9 6 6 6-6"/></svg><svg class="i" style="left:153.40px;top:1359.40px;color:#111;" width="32" height="32" viewBox="0 0 24 24" stroke-width="2"><path d="m6 14 1.5-2.9A2 2 0 0 1 9.24 10H20a2 2 0 0 1 1.94 2.5l-1.54 6a2 2 0 0 1-1.95 1.5H4a2 2 0 0 1-2-2V5a2 2 0 0 1 2-2h3.9a2 2 0 0 1 1.69.9l.81 1.2a2 2 0 0 0 1.67.9H18a2 2 0 0 1 2 2v2"/></svg><span class="t" style="left:199.00px;top:1365.63px;font-size:23px;color:#222;letter-spacing:0.262px;transform:scaleX(1.0850);-webkit-text-stroke:0.25px #222;">personal</span><div style="left:154.00px;top:1410.00px;width:28.00px;height:28.00px;background:#171717;border-radius:7px;box-shadow:0 1px 2px rgba(0,0,0,.2)"></div><svg class="i" style="left:156.00px;top:1412.00px;color:#fff;" width="24" height="24" viewBox="0 0 24 24" stroke-width="3"><path d="M20 6 9 17l-5-5"/></svg><svg class="i" style="left:198.00px;top:1410.00px;color:#aaa;" width="28" height="28" viewBox="0 0 24 24" stroke-width="2"><path d="M15 2H6a2 2 0 0 0-2 2v16a2 2 0 0 0 2 2h12a2 2 0 0 0 2-2V7Z"/><path d="M14 2v4a2 2 0 0 0 2 2h4"/></svg><span class="t" style="left:242.50px;top:1413.63px;font-size:23px;color:#1a1a1a;letter-spacing:0.306px;transform:scaleX(1.0850);-webkit-text-stroke:0.25px #1a1a1a;">cover_letter.docx</span><div style="left:154.00px;top:1458.00px;width:28.00px;height:28.00px;background:#171717;border-radius:7px;box-shadow:0 1px 2px rgba(0,0,0,.2)"></div><svg class="i" style="left:156.00px;top:1460.00px;color:#fff;" width="24" height="24" viewBox="0 0 24 24" stroke-width="3"><path d="M20 6 9 17l-5-5"/></svg><svg class="i" style="left:198.00px;top:1458.00px;color:#aaa;" width="28" height="28" viewBox="0 0 24 24" stroke-width="2"><path d="M15 2H6a2 2 0 0 0-2 2v16a2 2 0 0 0 2 2h12a2 2 0 0 0 2-2V7Z"/><path d="M14 2v4a2 2 0 0 0 2 2h4"/></svg><span class="t" style="left:242.50px;top:1461.63px;font-size:23px;color:#1a1a1a;letter-spacing:0.245px;transform:scaleX(1.0850);-webkit-text-stroke:0.25px #1a1a1a;">resume.pdf</span><svg class="i" style="left:114.00px;top:1506.00px;color:#999;" width="28" height="28" viewBox="0 0 24 24" stroke-width="2"><path d="m6 9 6 6 6-6"/></svg><svg class="i" style="left:153.40px;top:1503.40px;color:#111;" width="32" height="32" viewBox="0 0 24 24" stroke-width="2"><path d="m6 14 1.5-2.9A2 2 0 0 1 9.24 10H20a2 2 0 0 1 1.94 2.5l-1.54 6a2 2 0 0 1-1.95 1.5H4a2 2 0 0 1-2-2V5a2 2 0 0 1 2-2h3.9a2 2 0 0 1 1.69.9l.81 1.2a2 2 0 0 0 1.67.9H18a2 2 0 0 1 2 2v2"/></svg><span class="t" style="left:199.00px;top:1509.63px;font-size:23px;color:#222;letter-spacing:0.302px;transform:scaleX(1.0850);-webkit-text-stroke:0.25px #222;">work</span></div><div style="left:0.00px;top:1800.00px;width:727.00px;height:2.00px;background:#e6e6e6"></div><div style="left:0.00px;top:1802.00px;width:727.00px;height:42.00px;background:#fcfcfc"></div><span class="t" style="left:23.00px;top:1819.65px;font-size:22.5px;color:#777;letter-spacing:0.506px;transform:scaleX(1.0900);-webkit-text-stroke:0.2px #777;">Total 298</span><span class="t" style="left:552.70px;top:1819.65px;font-size:22.5px;color:#777;letter-spacing:0.491px;transform:scaleX(1.0900);-webkit-text-stroke:0.2px #777;">Selected 298</span><div style="left:727.00px;top:88.00px;width:4.00px;height:1756.00px;background:#e6e6e6"></div><div style="left:0.00px;top:1830.00px;width:17.00px;height:14.00px;background:radial-gradient(circle at 16.5px 0.5px,rgba(0,0,0,0) 15.6px,#15181f 16.2px,#15181f 17px,#3c4b64 17.6px)"></div>
<div style="left:731.00px;top:88.00px;width:779.00px;height:104.00px;background:#fcfcfc"></div><div style="left:731.00px;top:192.00px;width:779.00px;height:2.00px;background:#e6e6e6"></div><svg class="i" style="left:755.00px;top:124.00px;color:#111;" width="32" height="32" viewBox="0 0 24 24" stroke-width="2"><path d="m12.83 2.18a2 2 0 0 0-1.66 0L2.6 6.08a1 1 0 0 0 0 1.83l8.58 3.91a2 2 0 0 0 1.66 0l8.58-3.9a1 1 0 0 0 0-1.83Z"/><path d="m22 17.65-9.17 4.16a2 2 0 0 1-1.66 0L2 17.65"/><path d="m22 12.65-9.17 4.16a2 2 0 0 1-1.66 0L2 12.65"/></svg><span class="t" style="left:804.50px;top:127.52px;font-size:26.5px;color:#111;font-weight:700;transform:scaleX(0.9754);">Rule Chain</span><div style="left:1047.00px;top:108.50px;width:247.50px;height:62.00px;background:#fff;border:2px solid #e6e6e6;border-radius:18px;box-shadow:0 2px 3px rgba(0,0,0,.05)"></div><svg class="i" style="left:1067.75px;top:123.50px;color:#111;" width="32" height="32" viewBox="0 0 24 24" stroke-width="2"><path d="M12 17h1.5"/><path d="M12 22h1.5"/><path d="M12 2h1.5"/><path d="M17.5 22H19a1 1 0 0 0 1-1"/><path d="M17.5 2H19a1 1 0 0 1 1 1v1.5"/><path d="M20 14v3h-2.5"/><path d="M20 8.5V10"/><path d="M4 10V8.5"/><path d="M4 19.5V14"/><path d="M4 4.5A2.5 2.5 0 0 1 6.5 2H8"/><path d="M8 22H6.5a2.5 2.5 0 0 1 0-5H8"/></svg><span class="t" style="left:1108.75px;top:129.95px;font-size:22.5px;color:#161616;transform:scaleX(1.0668);-webkit-text-stroke:0.35px #161616;">Rule Templates</span><div style="left:1304.00px;top:108.00px;width:182.00px;height:63.50px;background:linear-gradient(105deg,#3562ee 0%,#5a55e8 55%,#7349e6 100%);border-radius:18px;box-shadow:0 4px 8px rgba(70,80,230,.22)"></div><svg class="i" style="left:1323.70px;top:123.50px;color:#fff;" width="32" height="32" viewBox="0 0 24 24" stroke-width="2"><path d="M5 12h14"/><path d="M12 5v14"/></svg><span class="t" style="left:1370.00px;top:129.95px;font-size:22.5px;color:#fff;transform:scaleX(1.0371);-webkit-text-stroke:0.35px #fff;">Add Rule</span><div style="left:731.00px;top:194.00px;width:779.00px;height:80.00px;background:#fdfdfd"></div><div style="left:731.00px;top:274.00px;width:779.00px;height:2.00px;background:#e6e6e6"></div><svg class="i" style="left:754.50px;top:220.00px;color:#777;" width="28" height="28" viewBox="0 0 24 24" stroke-width="2"><path d="M20 7h-9"/><path d="M14 17H5"/><circle cx="17" cy="17" r="3"/><circle cx="7" cy="7" r="3"/></svg><span class="t" style="left:800.00px;top:224.95px;font-size:22.5px;color:#222;letter-spacing:0.222px;transform:scaleX(1.0900);-webkit-text-stroke:0.35px #222;">Scope</span><div style="left:1101.00px;top:206.00px;width:146.70px;height:55.60px;background:#f2f2f2;border-radius:15px 0 0 15px"></div><svg class="i" style="left:1121.00px;top:218.30px;color:#161616;" width="31" height="31" viewBox="0 0 24 24" stroke-width="1.9"><polyline points="4 7 4 4 20 4 20 7"/><path d="M9 20h6"/><path d="M12 4v16"/></svg><span class="t" style="left:1162.50px;top:224.95px;font-size:22.5px;color:#161616;transform:scaleX(1.0746);-webkit-text-stroke:0.3px #161616;">Name</span><svg class="i" style="left:1267.75px;top:218.00px;color:#161616;" width="32" height="32" viewBox="0 0 24 24" stroke-width="2"><path d="M15 2H6a2 2 0 0 0-2 2v16a2 2 0 0 0 2 2h12a2 2 0 0 0 2-2V7Z"/><path d="M14 2v4a2 2 0 0 0 2 2h4"/><path d="M9 13v-1h6v1"/><path d="M12 12v6"/><path d="M11 18h2"/></svg><span class="t" style="left:1308.75px;top:224.95px;font-size:22.5px;color:#161616;transform:scaleX(1.0612);-webkit-text-stroke:0.3px #161616;">Ext</span><svg class="i" style="left:1384.60px;top:218.00px;color:#161616;" width="32" height="32" viewBox="0 0 24 24" stroke-width="2"><polyline points="15 3 21 3 21 9"/><polyline points="9 21 3 21 3 15"/><path d="M21 3l-7 7"/><path d="M3 21l7-7"/></svg><span class="t" style="left:1426.60px;top:224.95px;font-size:22.5px;color:#161616;transform:scaleX(1.0591);-webkit-text-stroke:0.3px #161616;">Full</span><div style="left:755.00px;top:300.00px;width:731.00px;height:970.50px;background:#fffcf5;border:2px solid #e6e6e4;border-left:4px solid #ff9500;border-radius:28px;box-shadow:0 2px 4px rgba(0,0,0,.05)"></div><div style="left:759.00px;top:350.00px;width:725.00px;height:68.00px;background:#fff7dc;border-radius:0 24px 0 0"></div><svg class="i" style="left:780.00px;top:371.00px;color:#bdbdbd;" width="26" height="26" viewBox="0 0 24 24" stroke-width="2"><circle cx="9" cy="12" r="1"/><circle cx="9" cy="5" r="1"/><circle cx="9" cy="19" r="1"/><circle cx="15" cy="12" r="1"/><circle cx="15" cy="5" r="1"/><circle cx="15" cy="19" r="1"/></svg><div style="left:819.00px;top:366.00px;width:36.00px;height:36.00px;background:#ff9500;border-radius:50%"></div><span class="t" style="left:830.60px;top:374.28px;font-size:22px;color:#fff;font-weight:700;">1</span><svg class="i" style="left:867.00px;top:370.00px;color:#e8800e;" width="28" height="28" viewBox="0 0 24 24" stroke-width="2"><path d="M4 9h16"/><path d="M4 15h16"/><path d="M10 3 8 21"/><path d="M16 3l-2 18"/></svg><span class="t" style="left:908.00px;top:374.45px;font-size:22.5px;color:#111;font-weight:700;transform:scaleX(1.0819);">Sequence</span><div style="left:1295.80px;top:370.50px;width:48.50px;height:28.00px;background:#1a1a1a;border-radius:15px"></div><div style="left:1318.00px;top:372.50px;width:24.00px;height:24.00px;background:#fff;border-radius:50%"></div><svg class="i" style="left:1370.00px;top:368.00px;color:#777;" width="32" height="32" viewBox="0 0 24 24" stroke-width="2"><rect width="14" height="14" x="8" y="8" rx="2" ry="2"/><path d="M4 16c-1.1 0-2-.9-2-2V4c0-1.1.9-2 2-2h10c1.1 0 2 .9 2 2"/></svg><svg class="i" style="left:1426.00px;top:368.00px;color:#777;" width="32" height="32" viewBox="0 0 24 24" stroke-width="2"><path d="M3 6h18"/><path d="M19 6v14c0 1-1 2-2 2H7c-1 0-2-1-2-2V6"/><path d="M8 6V4c0-1 1-2 2-2h4c1 0 2 1 2 2v2"/><path d="M10 11v6"/><path d="M14 11v6"/></svg><span class="t" style="left:780.00px;top:485.35px;font-size:20.5px;color:#777;letter-spacing:0.629px;transform:scaleX(1.0900);-webkit-text-stroke:0.2px #777;">Sequence type</span><div style="left:780.00px;top:515.75px;width:305.75px;height:70.00px;background:#fffcf5;border:2px solid #e6e5e0;border-radius:18px;box-shadow:0 2px 3px rgba(0,0,0,.05)"></div><span class="t" style="left:805.75px;top:541.82px;font-size:22.3px;color:#111;letter-spacing:0.172px;transform:scaleX(1.0900);-webkit-text-stroke:0.25px #111;">Numeric (1, 2, 3...)</span><svg class="i" style="left:1028.80px;top:535.25px;color:#aaa;" width="32" height="32" viewBox="0 0 24 24" stroke-width="2"><path d="m6 9 6 6 6-6"/></svg><span class="t" style="left:780.00px;top:606.65px;font-size:20.5px;color:#777;letter-spacing:0.620px;transform:scaleX(1.0900);-webkit-text-stroke:0.2px #777;">Start value</span><span class="t" style="left:1012.00px;top:606.65px;font-size:20.5px;color:#777;letter-spacing:0.466px;transform:scaleX(1.0900);-webkit-text-stroke:0.2px #777;">Step</span><span class="t" style="left:1244.25px;top:606.65px;font-size:20.5px;color:#777;letter-spacing:0.655px;transform:scaleX(1.0900);-webkit-text-stroke:0.2px #777;">Zero padding</span><div style="left:780.00px;top:636.75px;width:218.75px;height:54.00px;background:#fffcf5;border:2px solid #e6e5e0;border-radius:17px;box-shadow:0 2px 3px rgba(0,0,0,.04)"></div><span class="t" style="left:804.50px;top:652.54px;font-size:27px;color:#111;transform:scaleX(1.0600);-webkit-text-stroke:.25px #111;">1</span><div style="left:1012.50px;top:636.75px;width:218.75px;height:54.00px;background:#fffcf5;border:2px solid #e6e5e0;border-radius:17px;box-shadow:0 2px 3px rgba(0,0,0,.04)"></div><span class="t" style="left:1037.00px;top:652.54px;font-size:27px;color:#111;transform:scaleX(1.0600);-webkit-text-stroke:.25px #111;">1</span><div style="left:1244.25px;top:636.75px;width:218.75px;height:54.00px;background:#fffcf5;border:2px solid #e6e5e0;border-radius:17px;box-shadow:0 2px 3px rgba(0,0,0,.04)"></div><span class="t" style="left:1268.75px;top:652.54px;font-size:27px;color:#111;transform:scaleX(1.0600);-webkit-text-stroke:.25px #111;">3</span><span class="t" style="left:780.00px;top:711.45px;font-size:20.5px;color:#777;letter-spacing:0.792px;transform:scaleX(1.0900);-webkit-text-stroke:0.2px #777;">Format template (optional)</span><div style="left:780.00px;top:741.25px;width:683.00px;height:142.75px;background:#fffcf5;border:2px solid #e6e5e0;border-radius:22px"></div><div style="left:797.50px;top:759.50px;width:253.75px;height:46.50px;background:#d9d8d3;border:2px solid #b7b6b1;border-radius:15px;box-shadow:0 2px 3px rgba(0,0,0,.12)"></div><svg class="i" style="left:810.20px;top:770.20px;color:#777;" width="25" height="25" viewBox="0 0 24 24" stroke-width="2"><circle cx="9" cy="12" r="1"/><circle cx="9" cy="5" r="1"/><circle cx="9" cy="19" r="1"/><circle cx="15" cy="12" r="1"/><circle cx="15" cy="5" r="1"/><circle cx="15" cy="19" r="1"/></svg><span class="m" style="left:843.00px;top:773.04px;font-size:22px;color:#1a1a1a;-webkit-text-stroke:.3px #1a1a1a;">{folderName}</span><svg class="i" style="left:1012.75px;top:770.70px;color:#1a1a1a;" width="24" height="24" viewBox="0 0 24 24" stroke-width="2"><path d="M18 6 6 18"/><path d="m6 6 12 12"/></svg><div style="left:1065.00px;top:759.50px;width:103.75px;height:46.50px;background:#f4f4f3;border:2px solid #e6e6e4;border-radius:15px;box-shadow:0 2px 3px rgba(0,0,0,.08)"></div><svg class="i" style="left:1077.70px;top:770.20px;color:#bbb;" width="25" height="25" viewBox="0 0 24 24" stroke-width="2"><circle cx="9" cy="12" r="1"/><circle cx="9" cy="5" r="1"/><circle cx="9" cy="19" r="1"/><circle cx="15" cy="12" r="1"/><circle cx="15" cy="5" r="1"/><circle cx="15" cy="19" r="1"/></svg><span class="m" style="left:1108.00px;top:773.04px;font-size:22px;color:#333;-webkit-text-stroke:.3px #333;">-</span><svg class="i" style="left:1130.25px;top:770.70px;color:#666;" width="24" height="24" viewBox="0 0 24 24" stroke-width="2"><path d="M18 6 6 18"/><path d="m6 6 12 12"/></svg><div style="left:1182.00px;top:759.50px;width:173.75px;height:46.50px;background:#d9d8d3;border:2px solid #b7b6b1;border-radius:15px;box-shadow:0 2px 3px rgba(0,0,0,.12)"></div><svg class="i" style="left:1194.70px;top:770.20px;color:#777;" width="25" height="25" viewBox="0 0 24 24" stroke-width="2"><circle cx="9" cy="12" r="1"/><circle cx="9" cy="5" r="1"/><circle cx="9" cy="19" r="1"/><circle cx="15" cy="12" r="1"/><circle cx="15" cy="5" r="1"/><circle cx="15" cy="19" r="1"/></svg><span class="m" style="left:1227.50px;top:773.04px;font-size:22px;color:#1a1a1a;-webkit-text-stroke:.3px #1a1a1a;">{name}</span><svg class="i" style="left:1317.25px;top:770.70px;color:#1a1a1a;" width="24" height="24" viewBox="0 0 24 24" stroke-width="2"><path d="M18 6 6 18"/><path d="m6 6 12 12"/></svg><div style="left:797.50px;top:819.50px;width:135.00px;height:46.50px;background:#d9d8d3;border:2px solid #b7b6b1;border-radius:15px;box-shadow:0 2px 3px rgba(0,0,0,.12)"></div><svg class="i" style="left:810.20px;top:830.20px;color:#777;" width="25" height="25" viewBox="0 0 24 24" stroke-width="2"><circle cx="9" cy="12" r="1"/><circle cx="9" cy="5" r="1"/><circle cx="9" cy="19" r="1"/><circle cx="15" cy="12" r="1"/><circle cx="15" cy="5" r="1"/><circle cx="15" cy="19" r="1"/></svg><span class="m" style="left:843.00px;top:833.04px;font-size:22px;color:#1a1a1a;-webkit-text-stroke:.3px #1a1a1a;">{n}</span><svg class="i" style="left:894.00px;top:830.70px;color:#1a1a1a;" width="24" height="24" viewBox="0 0 24 24" stroke-width="2"><path d="M18 6 6 18"/><path d="m6 6 12 12"/></svg><div style="left:780.00px;top:901.75px;width:160.00px;height:46.25px;background:#fbfaf6;border:2px solid #e4e4e2;border-radius:17px"></div><svg class="i" style="left:797.00px;top:912.80px;color:#777;" width="24" height="24" viewBox="0 0 24 24" stroke-width="2"><polyline points="4 7 4 4 20 4 20 7"/><path d="M9 20h6"/><path d="M12 4v16"/></svg><span class="t" style="left:830.75px;top:915.42px;font-size:21px;color:#777;letter-spacing:0.297px;transform:scaleX(1.0900);-webkit-text-stroke:0.3px #777;">Add Text</span><div style="left:953.75px;top:901.75px;width:165.00px;height:46.25px;background:#e9e7e0;border:2px solid #c6c4be;border-radius:17px"></div><svg class="i" style="left:971.00px;top:912.80px;color:#1a1a1a;" width="24" height="24" viewBox="0 0 24 24" stroke-width="2"><path d="M8 21s-4-3-4-9 4-9 4-9"/><path d="M16 3s4 3 4 9-4 9-4 9"/><path d="M15 9l-6 6"/><path d="M9 9l6 6"/></svg><span class="t" style="left:1004.25px;top:915.42px;font-size:21px;color:#1a1a1a;letter-spacing:0.333px;transform:scaleX(1.0900);-webkit-text-stroke:0.35px #1a1a1a;">Variables</span><span class="t" style="left:1316.25px;top:916.87px;font-size:18.7px;color:#bbb;letter-spacing:0.568px;transform:scaleX(1.0900);-webkit-text-stroke:0.2px #bbb;">Drag to reorder</span><span class="t" style="left:780.00px;top:967.85px;font-size:20.5px;color:#777;letter-spacing:0.665px;transform:scaleX(1.0900);-webkit-text-stroke:0.2px #777;">Numbering scope</span><div style="left:780.00px;top:998.75px;width:220.00px;height:70.00px;background:#fffcf5;border:2px solid #e6e5e0;border-radius:18px;box-shadow:0 2px 3px rgba(0,0,0,.05)"></div><span class="t" style="left:805.75px;top:1024.32px;font-size:22.3px;color:#111;letter-spacing:0.354px;transform:scaleX(1.0900);-webkit-text-stroke:0.25px #111;">Per folder</span><svg class="i" style="left:932.00px;top:1018.00px;color:#aaa;" width="32" height="32" viewBox="0 0 24 24" stroke-width="2"><path d="m6 9 6 6 6-6"/></svg><div style="left:780.00px;top:1085.20px;width:26.50px;height:26.50px;background:#fffdf9;border:2px solid #dedcd6;border-radius:7px;box-shadow:0 1px 2px rgba(0,0,0,.05)"></div><span class="t" style="left:820.00px;top:1089.25px;font-size:20.5px;color:#777;letter-spacing:0.650px;transform:scaleX(1.0800);-webkit-text-stroke:.2px #777;">Sort before renaming</span><div style="left:780.00px;top:1130.20px;width:26.50px;height:26.50px;background:#fffdf9;border:2px solid #dedcd6;border-radius:7px;box-shadow:0 1px 2px rgba(0,0,0,.05)"></div><span class="t" style="left:820.00px;top:1134.25px;font-size:20.5px;color:#777;letter-spacing:0.650px;transform:scaleX(1.0800);-webkit-text-stroke:.2px #777;">Preserve original order</span><div style="left:780.00px;top:1175.20px;width:26.50px;height:26.50px;background:#fffdf9;border:2px solid #dedcd6;border-radius:7px;box-shadow:0 1px 2px rgba(0,0,0,.05)"></div><span class="t" style="left:820.00px;top:1179.25px;font-size:20.5px;color:#777;letter-spacing:0.650px;transform:scaleX(1.0800);-webkit-text-stroke:.2px #777;">Hierarchical numbering</span><div style="left:953.25px;top:957.25px;width:383.00px;height:414.75px;background:#fff;border:2px solid #e0e0e0;border-radius:22px;box-shadow:0 10px 26px rgba(0,0,0,.13),0 2px 6px rgba(0,0,0,.06)"></div><span class="t" style="left:979.50px;top:984.98px;font-size:23px;color:#111;letter-spacing:0.081px;transform:scaleX(1.0850);-webkit-text-stroke:0.25px #111;">Original filename</span><div style="left:1210.28px;top:978.75px;width:100.22px;height:33.25px;background:#f3f3f3;border-radius:17px"></div><span class="m" style="left:1224.03px;top:986.77px;font-size:20.2px;color:#222;-webkit-text-stroke:.35px #222;">{name}</span><span class="t" style="left:979.50px;top:1041.48px;font-size:23px;color:#111;letter-spacing:0.009px;transform:scaleX(1.0850);-webkit-text-stroke:0.25px #111;">Sequence number</span><div style="left:1246.64px;top:1035.25px;width:63.86px;height:33.25px;background:#f3f3f3;border-radius:17px"></div><span class="m" style="left:1260.39px;top:1043.27px;font-size:20.2px;color:#222;-webkit-text-stroke:.35px #222;">{n}</span><span class="t" style="left:979.50px;top:1097.98px;font-size:23px;color:#111;transform:scaleX(1.0559);-webkit-text-stroke:0.25px #111;">Date</span><div style="left:1210.28px;top:1091.75px;width:100.22px;height:33.25px;background:#f3f3f3;border-radius:17px"></div><span class="m" style="left:1224.03px;top:1099.77px;font-size:20.2px;color:#222;-webkit-text-stroke:.35px #222;">{date}</span><span class="t" style="left:979.50px;top:1154.48px;font-size:23px;color:#111;transform:scaleX(1.0725);-webkit-text-stroke:0.25px #111;">Time</span><div style="left:1210.28px;top:1148.25px;width:100.22px;height:33.25px;background:#f3f3f3;border-radius:17px"></div><span class="m" style="left:1224.03px;top:1156.27px;font-size:20.2px;color:#222;-webkit-text-stroke:.35px #222;">{time}</span><span class="t" style="left:979.50px;top:1210.98px;font-size:23px;color:#111;letter-spacing:0.008px;transform:scaleX(1.0850);-webkit-text-stroke:0.25px #111;">Date &amp; Time</span><div style="left:1161.80px;top:1204.75px;width:148.70px;height:33.25px;background:#f3f3f3;border-radius:17px"></div><span class="m" style="left:1175.55px;top:1212.77px;font-size:20.2px;color:#222;-webkit-text-stroke:.35px #222;">{datetime}</span><span class="t" style="left:979.50px;top:1267.48px;font-size:23px;color:#111;letter-spacing:0.104px;transform:scaleX(1.0850);-webkit-text-stroke:0.25px #111;">Timestamp</span><div style="left:1149.68px;top:1261.25px;width:160.82px;height:33.25px;background:#f3f3f3;border-radius:17px"></div><span class="m" style="left:1163.43px;top:1269.27px;font-size:20.2px;color:#222;-webkit-text-stroke:.35px #222;">{timestamp}</span><span class="t" style="left:979.50px;top:1323.98px;font-size:23px;color:#111;transform:scaleX(1.0726);-webkit-text-stroke:0.25px #111;">Folder name</span><div style="left:1137.56px;top:1317.75px;width:172.94px;height:33.25px;background:#f3f3f3;border-radius:17px"></div><span class="m" style="left:1151.31px;top:1325.77px;font-size:20.2px;color:#222;-webkit-text-stroke:.35px #222;">{folderName}</span><div style="left:731.00px;top:1752.00px;width:779.00px;height:2.00px;background:#e6e6e6"></div><div style="left:731.00px;top:1754.00px;width:779.00px;height:90.00px;background:#fcfcfc"></div><div style="left:1035.00px;top:1774.25px;width:213.00px;height:62.75px;background:#fff;border:2px solid #e6e6e6;border-radius:18px;box-shadow:0 2px 3px rgba(0,0,0,.05)"></div><svg class="i" style="left:1056.00px;top:1789.80px;color:#111;" width="32" height="32" viewBox="0 0 24 24" stroke-width="2"><path d="M3 6h18"/><path d="M19 6v14c0 1-1 2-2 2H7c-1 0-2-1-2-2V6"/><path d="M8 6V4c0-1 1-2 2-2h4c1 0 2 1 2 2v2"/><path d="M10 11v6"/><path d="M14 11v6"/></svg><span class="t" style="left:1097.50px;top:1796.65px;font-size:22.5px;color:#161616;letter-spacing:0.052px;transform:scaleX(1.0900);-webkit-text-stroke:0.35px #161616;">Clear Rules</span><div style="left:1266.25px;top:1774.25px;width:218.75px;height:62.75px;background:#fff;border:2px solid #e6e6e6;border-radius:18px;box-shadow:0 2px 3px rgba(0,0,0,.05)"></div><svg class="i" style="left:1287.00px;top:1789.80px;color:#111;" width="32" height="32" viewBox="0 0 24 24" stroke-width="2"><path d="M15.2 3a2 2 0 0 1 1.4.6l3.8 3.8a2 2 0 0 1 .6 1.4V19a2 2 0 0 1-2 2H5a2 2 0 0 1-2-2V5a2 2 0 0 1 2-2z"/><path d="M17 21v-7a1 1 0 0 0-1-1H8a1 1 0 0 0-1 1v7"/><path d="M7 3v4a1 1 0 0 0 1 1h7"/></svg><span class="t" style="left:1328.75px;top:1796.65px;font-size:22.5px;color:#161616;letter-spacing:0.075px;transform:scaleX(1.0900);-webkit-text-stroke:0.35px #161616;">Save Preset</span><div style="left:1510.00px;top:88.00px;width:2.00px;height:1756.00px;background:#e6e6e6"></div>
<div style="left:1512.00px;top:88.00px;width:1836.00px;height:104.00px;background:#fcfcfc"></div><div style="left:1512.00px;top:192.00px;width:1836.00px;height:2.00px;background:#e6e6e6"></div><svg class="i" style="left:1536.00px;top:124.00px;color:#111;" width="32" height="32" viewBox="0 0 24 24" stroke-width="2"><path d="M2.062 12.348a1 1 0 0 1 0-.696 10.75 10.75 0 0 1 19.876 0 1 1 0 0 1 0 .696 10.75 10.75 0 0 1-19.876 0"/><circle cx="12" cy="12" r="3"/></svg><span class="t" style="left:1585.00px;top:127.52px;font-size:26.5px;color:#111;font-weight:700;transform:scaleX(1.0057);">Preview</span><div style="left:2714.00px;top:112.25px;width:618.75px;height:55.75px;background:#f3f3f3;border-radius:28px"></div><div style="left:2715.50px;top:116.00px;width:178.00px;height:47.75px;background:#fff;border-radius:24px;box-shadow:0 2px 5px rgba(0,0,0,.12),0 0 2px rgba(0,0,0,.06)"></div><span class="t" style="left:2735.75px;top:130.40px;font-size:22.5px;color:#111;transform:scaleX(1.0660);-webkit-text-stroke:0.35px #111;">Show All</span><span class="t" style="left:2837.75px;top:133.62px;font-size:18.7px;color:#111;letter-spacing:0.206px;transform:scaleX(1.1000);-webkit-text-stroke:0.25px #111;">298</span><span class="t" style="left:2919.00px;top:130.40px;font-size:22.5px;color:#777;letter-spacing:0.051px;transform:scaleX(1.0900);-webkit-text-stroke:0.3px #777;">Affected Only</span><span class="t" style="left:3076.50px;top:133.62px;font-size:18.7px;color:#777;letter-spacing:0.357px;transform:scaleX(1.1000);-webkit-text-stroke:0.2px #777;">298</span><span class="t" style="left:3157.25px;top:130.40px;font-size:22.5px;color:#777;letter-spacing:0.031px;transform:scaleX(1.0900);-webkit-text-stroke:0.3px #777;">Conflicts Only</span><div style="left:1512.00px;top:194.00px;width:1836.00px;height:80.00px;background:#fcfcfc"></div><div style="left:1512.00px;top:274.00px;width:1836.00px;height:2.00px;background:#e6e6e6"></div><span class="t" style="left:1572.50px;top:224.65px;font-size:22.5px;color:#777;letter-spacing:0.400px;transform:scaleX(1.0900);-webkit-text-stroke:0.2px #777;">Original</span><svg class="i" style="left:2443.80px;top:221.25px;color:#777;" width="27" height="27" viewBox="0 0 24 24" stroke-width="1.9"><path d="M5 12h14"/><path d="m12 5 7 7-7 7"/></svg><span class="t" style="left:2506.25px;top:224.45px;font-size:22.5px;color:#777;letter-spacing:0.052px;transform:scaleX(1.0900);-webkit-text-stroke:0.2px #777;">New Name</span><div class="clip" style="left:1512.00px;top:276.00px;width:1836.00px;height:1476.00px;"><div style="left:45.75px;top:56.00px;width:2.00px;height:1468.00px;background:rgba(0,0,0,.05)"></div><div style="left:77.75px;top:104.00px;width:2.00px;height:560.00px;background:rgba(0,0,0,.05)"></div><div style="left:77.75px;top:712.00px;width:2.00px;height:560.00px;background:rgba(0,0,0,.05)"></div><div style="left:77.75px;top:1320.00px;width:2.00px;height:204.00px;background:rgba(0,0,0,.05)"></div><div style="left:109.75px;top:1368.00px;width:2.00px;height:156.00px;background:rgba(0,0,0,.05)"></div><div style="left:141.75px;top:1416.00px;width:2.00px;height:108.00px;background:rgba(0,0,0,.05)"></div><svg class="i" style="left:19.75px;top:18.00px;color:#999;" width="28" height="28" viewBox="0 0 24 24" stroke-width="2"><path d="m6 9 6 6 6-6"/></svg><svg class="i" style="left:59.15px;top:15.40px;color:#111;" width="32" height="32" viewBox="0 0 24 24" stroke-width="2"><path d="m6 14 1.5-2.9A2 2 0 0 1 9.24 10H20a2 2 0 0 1 1.94 2.5l-1.54 6a2 2 0 0 1-1.95 1.5H4a2 2 0 0 1-2-2V5a2 2 0 0 1 2-2h3.9a2 2 0 0 1 1.69.9l.81 1.2a2 2 0 0 0 1.67.9H18a2 2 0 0 1 2 2v2"/></svg><span class="t" style="left:104.75px;top:21.63px;font-size:23px;color:#222;letter-spacing:0.637px;transform:scaleX(1.0850);-webkit-text-stroke:0.25px #222;">rename-test</span><div style="left:1759.95px;top:17.00px;width:60.80px;height:29.50px;background:#f6f6f6;border-radius:15px"></div><span class="m" style="left:1772.35px;top:23.37px;font-size:20px;color:#777;">298</span><svg class="i" style="left:51.75px;top:66.00px;color:#999;" width="28" height="28" viewBox="0 0 24 24" stroke-width="2"><path d="m6 9 6 6 6-6"/></svg><svg class="i" style="left:91.15px;top:63.40px;color:#111;" width="32" height="32" viewBox="0 0 24 24" stroke-width="2"><path d="m6 14 1.5-2.9A2 2 0 0 1 9.24 10H20a2 2 0 0 1 1.94 2.5l-1.54 6a2 2 0 0 1-1.95 1.5H4a2 2 0 0 1-2-2V5a2 2 0 0 1 2-2h3.9a2 2 0 0 1 1.69.9l.81 1.2a2 2 0 0 0 1.67.9H18a2 2 0 0 1 2 2v2"/></svg><span class="t" style="left:136.75px;top:69.63px;font-size:23px;color:#222;letter-spacing:0.549px;transform:scaleX(1.0850);-webkit-text-stroke:0.25px #222;">01-basic-sequence</span><div style="left:1771.95px;top:65.00px;width:48.80px;height:29.50px;background:#f6f6f6;border-radius:15px"></div><span class="m" style="left:1784.35px;top:71.37px;font-size:20px;color:#777;">10</span><svg class="i" style="left:87.75px;top:118.00px;color:#aaa;" width="28" height="28" viewBox="0 0 24 24" stroke-width="2"><path d="M15 2H6a2 2 0 0 0-2 2v16a2 2 0 0 0 2 2h12a2 2 0 0 0 2-2V7Z"/><path d="M14 2v4a2 2 0 0 0 2 2h4"/></svg><span class="m" style="left:133.00px;top:120.90px;font-size:24px;color:#111;-webkit-text-stroke:.4px #111;">IMG_2024_005.jpg</span><svg class="i" style="left:964.20px;top:119.50px;color:#bbb;" width="26" height="26" viewBox="0 0 24 24" stroke-width="2"><path d="M5 12h14"/><path d="m12 5 7 7-7 7"/></svg><span class="m" style="left:1004.25px;top:120.60px;font-size:24px;color:#111;-webkit-text-stroke:.4px"><span class="g">01-basic-sequence-</span>IMG_2024_005<span class="g">001</span>.jpg</span><svg class="i" style="left:87.75px;top:174.00px;color:#aaa;" width="28" height="28" viewBox="0 0 24 24" stroke-width="2"><path d="M15 2H6a2 2 0 0 0-2 2v16a2 2 0 0 0 2 2h12a2 2 0 0 0 2-2V7Z"/><path d="M14 2v4a2 2 0 0 0 2 2h4"/></svg><span class="m" style="left:133.00px;top:176.90px;font-size:24px;color:#111;-webkit-text-stroke:.4px #111;">IMG_2024_004.jpg</span><svg class="i" style="left:964.20px;top:175.50px;color:#bbb;" width="26" height="26" viewBox="0 0 24 24" stroke-width="2"><path d="M5 12h14"/><path d="m12 5 7 7-7 7"/></svg><span class="m" style="left:1004.25px;top:176.60px;font-size:24px;color:#111;-webkit-text-stroke:.4px"><span class="g">01-basic-sequence-</span>IMG_2024_004<span class="g">002</span>.jpg</span><svg class="i" style="left:87.75px;top:230.00px;color:#aaa;" width="28" height="28" viewBox="0 0 24 24" stroke-width="2"><path d="M15 2H6a2 2 0 0 0-2 2v16a2 2 0 0 0 2 2h12a2 2 0 0 0 2-2V7Z"/><path d="M14 2v4a2 2 0 0 0 2 2h4"/></svg><span class="m" style="left:133.00px;top:232.90px;font-size:24px;color:#111;-webkit-text-stroke:.4px #111;">photo_7.png</span><svg class="i" style="left:964.20px;top:231.50px;color:#bbb;" width="26" height="26" viewBox="0 0 24 24" stroke-width="2"><path d="M5 12h14"/><path d="m12 5 7 7-7 7"/></svg><span class="m" style="left:1004.25px;top:232.60px;font-size:24px;color:#111;-webkit-text-stroke:.4px"><span class="g">01-basic-sequence-</span>photo_7<span class="g">003</span>.png</span><svg class="i" style="left:87.75px;top:286.00px;color:#aaa;" width="28" height="28" viewBox="0 0 24 24" stroke-width="2"><path d="M15 2H6a2 2 0 0 0-2 2v16a2 2 0 0 0 2 2h12a2 2 0 0 0 2-2V7Z"/><path d="M14 2v4a2 2 0 0 0 2 2h4"/></svg><span class="m" style="left:133.00px;top:288.90px;font-size:24px;color:#111;-webkit-text-stroke:.4px #111;">photo_8.png</span><svg class="i" style="left:964.20px;top:287.50px;color:#bbb;" width="26" height="26" viewBox="0 0 24 24" stroke-width="2"><path d="M5 12h14"/><path d="m12 5 7 7-7 7"/></svg><span class="m" style="left:1004.25px;top:288.60px;font-size:24px;color:#111;-webkit-text-stroke:.4px"><span class="g">01-basic-sequence-</span>photo_8<span class="g">004</span>.png</span><svg class="i" style="left:87.75px;top:342.00px;color:#aaa;" width="28" height="28" viewBox="0 0 24 24" stroke-width="2"><path d="M15 2H6a2 2 0 0 0-2 2v16a2 2 0 0 0 2 2h12a2 2 0 0 0 2-2V7Z"/><path d="M14 2v4a2 2 0 0 0 2 2h4"/></svg><span class="m" style="left:133.00px;top:344.90px;font-size:24px;color:#111;-webkit-text-stroke:.4px #111;">photo_10.png</span><svg class="i" style="left:964.20px;top:343.50px;color:#bbb;" width="26" height="26" viewBox="0 0 24 24" stroke-width="2"><path d="M5 12h14"/><path d="m12 5 7 7-7 7"/></svg><span class="m" style="left:1004.25px;top:344.60px;font-size:24px;color:#111;-webkit-text-stroke:.4px"><span class="g">01-basic-sequence-</span>photo_1<span class="g">00</span>0<span class="g">5</span>.png</span><svg class="i" style="left:87.75px;top:398.00px;color:#aaa;" width="28" height="28" viewBox="0 0 24 24" stroke-width="2"><path d="M15 2H6a2 2 0 0 0-2 2v16a2 2 0 0 0 2 2h12a2 2 0 0 0 2-2V7Z"/><path d="M14 2v4a2 2 0 0 0 2 2h4"/></svg><span class="m" style="left:133.00px;top:400.90px;font-size:24px;color:#111;-webkit-text-stroke:.4px #111;">IMG_2024_002.jpg</span><svg class="i" style="left:964.20px;top:399.50px;color:#bbb;" width="26" height="26" viewBox="0 0 24 24" stroke-width="2"><path d="M5 12h14"/><path d="m12 5 7 7-7 7"/></svg><span class="m" style="left:1004.25px;top:400.60px;font-size:24px;color:#111;-webkit-text-stroke:.4px"><span class="g">01-basic-sequence-</span>IMG_2024_002<span class="g">006</span>.jpg</span><svg class="i" style="left:87.75px;top:454.00px;color:#aaa;" width="28" height="28" viewBox="0 0 24 24" stroke-width="2"><path d="M15 2H6a2 2 0 0 0-2 2v16a2 2 0 0 0 2 2h12a2 2 0 0 0 2-2V7Z"/><path d="M14 2v4a2 2 0 0 0 2 2h4"/></svg><span class="m" style="left:133.00px;top:456.90px;font-size:24px;color:#111;-webkit-text-stroke:.4px #111;">photo_9.png</span><svg class="i" style="left:964.20px;top:455.50px;color:#bbb;" width="26" height="26" viewBox="0 0 24 24" stroke-width="2"><path d="M5 12h14"/><path d="m12 5 7 7-7 7"/></svg><span class="m" style="left:1004.25px;top:456.60px;font-size:24px;color:#111;-webkit-text-stroke:.4px"><span class="g">01-basic-sequence-</span>photo_9<span class="g">007</span>.png</span><svg class="i" style="left:87.75px;top:510.00px;color:#aaa;" width="28" height="28" viewBox="0 0 24 24" stroke-width="2"><path d="M15 2H6a2 2 0 0 0-2 2v16a2 2 0 0 0 2 2h12a2 2 0 0 0 2-2V7Z"/><path d="M14 2v4a2 2 0 0 0 2 2h4"/></svg><span class="m" style="left:133.00px;top:512.90px;font-size:24px;color:#111;-webkit-text-stroke:.4px #111;">IMG_2024_001.jpg</span><svg class="i" style="left:964.20px;top:511.50px;color:#bbb;" width="26" height="26" viewBox="0 0 24 24" stroke-width="2"><path d="M5 12h14"/><path d="m12 5 7 7-7 7"/></svg><span class="m" style="left:1004.25px;top:512.60px;font-size:24px;color:#111;-webkit-text-stroke:.4px"><span class="g">01-basic-sequence-</span>IMG_2024_001<span class="g">008</span>.jpg</span><svg class="i" style="left:87.75px;top:566.00px;color:#aaa;" width="28" height="28" viewBox="0 0 24 24" stroke-width="2"><path d="M15 2H6a2 2 0 0 0-2 2v16a2 2 0 0 0 2 2h12a2 2 0 0 0 2-2V7Z"/><path d="M14 2v4a2 2 0 0 0 2 2h4"/></svg><span class="m" style="left:133.00px;top:568.90px;font-size:24px;color:#111;-webkit-text-stroke:.4px #111;">photo_6.png</span><svg class="i" style="left:964.20px;top:567.50px;color:#bbb;" width="26" height="26" viewBox="0 0 24 24" stroke-width="2"><path d="M5 12h14"/><path d="m12 5 7 7-7 7"/></svg><span class="m" style="left:1004.25px;top:568.60px;font-size:24px;color:#111;-webkit-text-stroke:.4px"><span class="g">01-basic-sequence-</span>photo_6<span class="g">009</span>.png</span><svg class="i" style="left:87.75px;top:622.00px;color:#aaa;" width="28" height="28" viewBox="0 0 24 24" stroke-width="2"><path d="M15 2H6a2 2 0 0 0-2 2v16a2 2 0 0 0 2 2h12a2 2 0 0 0 2-2V7Z"/><path d="M14 2v4a2 2 0 0 0 2 2h4"/></svg><span class="m" style="left:133.00px;top:624.90px;font-size:24px;color:#111;-webkit-text-stroke:.4px #111;">IMG_2024_003.jpg</span><svg class="i" style="left:964.20px;top:623.50px;color:#bbb;" width="26" height="26" viewBox="0 0 24 24" stroke-width="2"><path d="M5 12h14"/><path d="m12 5 7 7-7 7"/></svg><span class="m" style="left:1004.25px;top:624.60px;font-size:24px;color:#111;-webkit-text-stroke:.4px"><span class="g">01-basic-sequence-</span>IMG_2024_003<span class="g">010</span>.jpg</span><svg class="i" style="left:51.75px;top:674.00px;color:#999;" width="28" height="28" viewBox="0 0 24 24" stroke-width="2"><path d="m6 9 6 6 6-6"/></svg><svg class="i" style="left:91.15px;top:671.40px;color:#111;" width="32" height="32" viewBox="0 0 24 24" stroke-width="2"><path d="m6 14 1.5-2.9A2 2 0 0 1 9.24 10H20a2 2 0 0 1 1.94 2.5l-1.54 6a2 2 0 0 1-1.95 1.5H4a2 2 0 0 1-2-2V5a2 2 0 0 1 2-2h3.9a2 2 0 0 1 1.69.9l.81 1.2a2 2 0 0 0 1.67.9H18a2 2 0 0 1 2 2v2"/></svg><span class="t" style="left:136.75px;top:677.63px;font-size:23px;color:#222;letter-spacing:0.725px;transform:scaleX(1.0850);-webkit-text-stroke:0.25px #222;">02-mixed-extensions</span><div style="left:1771.95px;top:673.00px;width:48.80px;height:29.50px;background:#f6f6f6;border-radius:15px"></div><span class="m" style="left:1784.35px;top:679.37px;font-size:20px;color:#777;">10</span><svg class="i" style="left:87.75px;top:726.00px;color:#aaa;" width="28" height="28" viewBox="0 0 24 24" stroke-width="2"><path d="M15 2H6a2 2 0 0 0-2 2v16a2 2 0 0 0 2 2h12a2 2 0 0 0 2-2V7Z"/><path d="M14 2v4a2 2 0 0 0 2 2h4"/></svg><span class="m" style="left:133.00px;top:728.90px;font-size:24px;color:#111;-webkit-text-stroke:.4px #111;">sheet3.xlsx</span><svg class="i" style="left:964.20px;top:727.50px;color:#bbb;" width="26" height="26" viewBox="0 0 24 24" stroke-width="2"><path d="M5 12h14"/><path d="m12 5 7 7-7 7"/></svg><span class="m" style="left:1004.25px;top:728.60px;font-size:24px;color:#111;-webkit-text-stroke:.4px"><span class="g">02-mixed-extensions-</span>sheet3<span class="g">001</span>.xlsx</span><svg class="i" style="left:87.75px;top:782.00px;color:#aaa;" width="28" height="28" viewBox="0 0 24 24" stroke-width="2"><path d="M15 2H6a2 2 0 0 0-2 2v16a2 2 0 0 0 2 2h12a2 2 0 0 0 2-2V7Z"/><path d="M14 2v4a2 2 0 0 0 2 2h4"/></svg><span class="m" style="left:133.00px;top:784.90px;font-size:24px;color:#111;-webkit-text-stroke:.4px #111;">sheet4.xls</span><svg class="i" style="left:964.20px;top:783.50px;color:#bbb;" width="26" height="26" viewBox="0 0 24 24" stroke-width="2"><path d="M5 12h14"/><path d="m12 5 7 7-7 7"/></svg><span class="m" style="left:1004.25px;top:784.60px;font-size:24px;color:#111;-webkit-text-stroke:.4px"><span class="g">02-mixed-extensions-</span>sheet4<span class="g">002</span>.xls</span><svg class="i" style="left:87.75px;top:838.00px;color:#aaa;" width="28" height="28" viewBox="0 0 24 24" stroke-width="2"><path d="M15 2H6a2 2 0 0 0-2 2v16a2 2 0 0 0 2 2h12a2 2 0 0 0 2-2V7Z"/><path d="M14 2v4a2 2 0 0 0 2 2h4"/></svg><span class="m" style="left:133.00px;top:840.90px;font-size:24px;color:#111;-webkit-text-stroke:.4px #111;">slides1.pptx</span><svg class="i" style="left:964.20px;top:839.50px;color:#bbb;" width="26" height="26" viewBox="0 0 24 24" stroke-width="2"><path d="M5 12h14"/><path d="m12 5 7 7-7 7"/></svg><span class="m" style="left:1004.25px;top:840.60px;font-size:24px;color:#111;-webkit-text-stroke:.4px"><span class="g">02-mixed-extensions-</span>slides1<span class="g">003</span>.pptx</span><svg class="i" style="left:87.75px;top:894.00px;color:#aaa;" width="28" height="28" viewBox="0 0 24 24" stroke-width="2"><path d="M15 2H6a2 2 0 0 0-2 2v16a2 2 0 0 0 2 2h12a2 2 0 0 0 2-2V7Z"/><path d="M14 2v4a2 2 0 0 0 2 2h4"/></svg><span class="m" style="left:133.00px;top:896.90px;font-size:24px;color:#111;-webkit-text-stroke:.4px #111;">sheet2.xls</span><svg class="i" style="left:964.20px;top:895.50px;color:#bbb;" width="26" height="26" viewBox="0 0 24 24" stroke-width="2"><path d="M5 12h14"/><path d="m12 5 7 7-7 7"/></svg><span class="m" style="left:1004.25px;top:896.60px;font-size:24px;color:#111;-webkit-text-stroke:.4px"><span class="g">02-mixed-extensions-</span>sheet2<span class="g">004</span>.xls</span><svg class="i" style="left:87.75px;top:950.00px;color:#aaa;" width="28" height="28" viewBox="0 0 24 24" stroke-width="2"><path d="M15 2H6a2 2 0 0 0-2 2v16a2 2 0 0 0 2 2h12a2 2 0 0 0 2-2V7Z"/><path d="M14 2v4a2 2 0 0 0 2 2h4"/></svg><span class="m" style="left:133.00px;top:952.90px;font-size:24px;color:#111;-webkit-text-stroke:.4px #111;">doc2.docx</span><svg class="i" style="left:964.20px;top:951.50px;color:#bbb;" width="26" height="26" viewBox="0 0 24 24" stroke-width="2"><path d="M5 12h14"/><path d="m12 5 7 7-7 7"/></svg><span class="m" style="left:1004.25px;top:952.60px;font-size:24px;color:#111;-webkit-text-stroke:.4px"><span class="g">02-mixed-extensions-</span>doc2<span class="g">005</span>.docx</span><svg class="i" style="left:87.75px;top:1006.00px;color:#aaa;" width="28" height="28" viewBox="0 0 24 24" stroke-width="2"><path d="M15 2H6a2 2 0 0 0-2 2v16a2 2 0 0 0 2 2h12a2 2 0 0 0 2-2V7Z"/><path d="M14 2v4a2 2 0 0 0 2 2h4"/></svg><span class="m" style="left:133.00px;top:1008.90px;font-size:24px;color:#111;-webkit-text-stroke:.4px #111;">doc3.pdf</span><svg class="i" style="left:964.20px;top:1007.50px;color:#bbb;" width="26" height="26" viewBox="0 0 24 24" stroke-width="2"><path d="M5 12h14"/><path d="m12 5 7 7-7 7"/></svg><span class="m" style="left:1004.25px;top:1008.60px;font-size:24px;color:#111;-webkit-text-stroke:.4px"><span class="g">02-mixed-extensions-</span>doc3<span class="g">006</span>.pdf</span><svg class="i" style="left:87.75px;top:1062.00px;color:#aaa;" width="28" height="28" viewBox="0 0 24 24" stroke-width="2"><path d="M15 2H6a2 2 0 0 0-2 2v16a2 2 0 0 0 2 2h12a2 2 0 0 0 2-2V7Z"/><path d="M14 2v4a2 2 0 0 0 2 2h4"/></svg><span class="m" style="left:133.00px;top:1064.90px;font-size:24px;color:#111;-webkit-text-stroke:.4px #111;">sheet1.xlsx</span><svg class="i" style="left:964.20px;top:1063.50px;color:#bbb;" width="26" height="26" viewBox="0 0 24 24" stroke-width="2"><path d="M5 12h14"/><path d="m12 5 7 7-7 7"/></svg><span class="m" style="left:1004.25px;top:1064.60px;font-size:24px;color:#111;-webkit-text-stroke:.4px"><span class="g">02-mixed-extensions-</span>sheet1<span class="g">007</span>.xlsx</span><svg class="i" style="left:87.75px;top:1118.00px;color:#aaa;" width="28" height="28" viewBox="0 0 24 24" stroke-width="2"><path d="M15 2H6a2 2 0 0 0-2 2v16a2 2 0 0 0 2 2h12a2 2 0 0 0 2-2V7Z"/><path d="M14 2v4a2 2 0 0 0 2 2h4"/></svg><span class="m" style="left:133.00px;top:1120.90px;font-size:24px;color:#111;-webkit-text-stroke:.4px #111;">slides2.ppt</span><svg class="i" style="left:964.20px;top:1119.50px;color:#bbb;" width="26" height="26" viewBox="0 0 24 24" stroke-width="2"><path d="M5 12h14"/><path d="m12 5 7 7-7 7"/></svg><span class="m" style="left:1004.25px;top:1120.60px;font-size:24px;color:#111;-webkit-text-stroke:.4px"><span class="g">02-mixed-extensions-</span>slides2<span class="g">008</span>.ppt</span><svg class="i" style="left:87.75px;top:1174.00px;color:#aaa;" width="28" height="28" viewBox="0 0 24 24" stroke-width="2"><path d="M15 2H6a2 2 0 0 0-2 2v16a2 2 0 0 0 2 2h12a2 2 0 0 0 2-2V7Z"/><path d="M14 2v4a2 2 0 0 0 2 2h4"/></svg><span class="m" style="left:133.00px;top:1176.90px;font-size:24px;color:#111;-webkit-text-stroke:.4px #111;">doc1.pdf</span><svg class="i" style="left:964.20px;top:1175.50px;color:#bbb;" width="26" height="26" viewBox="0 0 24 24" stroke-width="2"><path d="M5 12h14"/><path d="m12 5 7 7-7 7"/></svg><span class="m" style="left:1004.25px;top:1176.60px;font-size:24px;color:#111;-webkit-text-stroke:.4px"><span class="g">02-mixed-extensions-</span>doc1<span class="g">009</span>.pdf</span><svg class="i" style="left:87.75px;top:1230.00px;color:#aaa;" width="28" height="28" viewBox="0 0 24 24" stroke-width="2"><path d="M15 2H6a2 2 0 0 0-2 2v16a2 2 0 0 0 2 2h12a2 2 0 0 0 2-2V7Z"/><path d="M14 2v4a2 2 0 0 0 2 2h4"/></svg><span class="m" style="left:133.00px;top:1232.90px;font-size:24px;color:#111;-webkit-text-stroke:.4px #111;">doc4.docx</span><svg class="i" style="left:964.20px;top:1231.50px;color:#bbb;" width="26" height="26" viewBox="0 0 24 24" stroke-width="2"><path d="M5 12h14"/><path d="m12 5 7 7-7 7"/></svg><span class="m" style="left:1004.25px;top:1232.60px;font-size:24px;color:#111;-webkit-text-stroke:.4px"><span class="g">02-mixed-extensions-</span>doc4<span class="g">010</span>.docx</span><svg class="i" style="left:51.75px;top:1282.00px;color:#999;" width="28" height="28" viewBox="0 0 24 24" stroke-width="2"><path d="m6 9 6 6 6-6"/></svg><svg class="i" style="left:91.15px;top:1279.40px;color:#111;" width="32" height="32" viewBox="0 0 24 24" stroke-width="2"><path d="m6 14 1.5-2.9A2 2 0 0 1 9.24 10H20a2 2 0 0 1 1.94 2.5l-1.54 6a2 2 0 0 1-1.95 1.5H4a2 2 0 0 1-2-2V5a2 2 0 0 1 2-2h3.9a2 2 0 0 1 1.69.9l.81 1.2a2 2 0 0 0 1.67.9H18a2 2 0 0 1 2 2v2"/></svg><span class="t" style="left:136.75px;top:1285.63px;font-size:23px;color:#222;letter-spacing:0.841px;transform:scaleX(1.0850);-webkit-text-stroke:0.25px #222;">03-folders</span><div style="left:1771.95px;top:1281.00px;width:48.80px;height:29.50px;background:#f6f6f6;border-radius:15px"></div><span class="m" style="left:1784.35px;top:1287.37px;font-size:20px;color:#777;">18</span><svg class="i" style="left:83.75px;top:1330.00px;color:#999;" width="28" height="28" viewBox="0 0 24 24" stroke-width="2"><path d="m6 9 6 6 6-6"/></svg><svg class="i" style="left:123.15px;top:1327.40px;color:#111;" width="32" height="32" viewBox="0 0 24 24" stroke-width="2"><path d="m6 14 1.5-2.9A2 2 0 0 1 9.24 10H20a2 2 0 0 1 1.94 2.5l-1.54 6a2 2 0 0 1-1.95 1.5H4a2 2 0 0 1-2-2V5a2 2 0 0 1 2-2h3.9a2 2 0 0 1 1.69.9l.81 1.2a2 2 0 0 0 1.67.9H18a2 2 0 0 1 2 2v2"/></svg><span class="t" style="left:168.75px;top:1333.63px;font-size:23px;color:#222;letter-spacing:0.525px;transform:scaleX(1.0850);-webkit-text-stroke:0.25px #222;">documents</span><div style="left:1783.95px;top:1329.00px;width:36.80px;height:29.50px;background:#f6f6f6;border-radius:15px"></div><span class="m" style="left:1796.35px;top:1335.37px;font-size:20px;color:#777;">8</span><svg class="i" style="left:115.75px;top:1378.00px;color:#999;" width="28" height="28" viewBox="0 0 24 24" stroke-width="2"><path d="m6 9 6 6 6-6"/></svg><svg class="i" style="left:155.15px;top:1375.40px;color:#111;" width="32" height="32" viewBox="0 0 24 24" stroke-width="2"><path d="m6 14 1.5-2.9A2 2 0 0 1 9.24 10H20a2 2 0 0 1 1.94 2.5l-1.54 6a2 2 0 0 1-1.95 1.5H4a2 2 0 0 1-2-2V5a2 2 0 0 1 2-2h3.9a2 2 0 0 1 1.69.9l.81 1.2a2 2 0 0 0 1.67.9H18a2 2 0 0 1 2 2v2"/></svg><span class="t" style="left:200.75px;top:1381.63px;font-size:23px;color:#222;letter-spacing:0.257px;transform:scaleX(1.0850);-webkit-text-stroke:0.25px #222;">archive</span><div style="left:1783.95px;top:1377.00px;width:36.80px;height:29.50px;background:#f6f6f6;border-radius:15px"></div><span class="m" style="left:1796.35px;top:1383.37px;font-size:20px;color:#777;">2</span><svg class="i" style="left:151.75px;top:1430.00px;color:#aaa;" width="28" height="28" viewBox="0 0 24 24" stroke-width="2"><path d="M15 2H6a2 2 0 0 0-2 2v16a2 2 0 0 0 2 2h12a2 2 0 0 0 2-2V7Z"/><path d="M14 2v4a2 2 0 0 0 2 2h4"/></svg><span class="m" style="left:197.00px;top:1432.90px;font-size:24px;color:#111;-webkit-text-stroke:.4px #111;">2023_backup.xlsx</span><svg class="i" style="left:996.20px;top:1431.50px;color:#bbb;" width="26" height="26" viewBox="0 0 24 24" stroke-width="2"><path d="M5 12h14"/><path d="m12 5 7 7-7 7"/></svg><span class="m" style="left:1036.25px;top:1432.60px;font-size:24px;color:#111;-webkit-text-stroke:.4px"><span class="g">archive-</span>2023_backup<span class="g">001</span>.xlsx</span><svg class="i" style="left:151.75px;top:1486.00px;color:#aaa;" width="28" height="28" viewBox="0 0 24 24" stroke-width="2"><path d="M15 2H6a2 2 0 0 0-2 2v16a2 2 0 0 0 2 2h12a2 2 0 0 0 2-2V7Z"/><path d="M14 2v4a2 2 0 0 0 2 2h4"/></svg><span class="m" style="left:197.00px;top:1488.90px;font-size:24px;color:#111;-webkit-text-stroke:.4px #111;">2023_old_report.pdf</span><svg class="i" style="left:996.20px;top:1487.50px;color:#bbb;" width="26" height="26" viewBox="0 0 24 24" stroke-width="2"><path d="M5 12h14"/><path d="m12 5 7 7-7 7"/></svg><span class="m" style="left:1036.25px;top:1488.60px;font-size:24px;color:#111;-webkit-text-stroke:.4px"><span class="g">archive-</span>2023_old_report<span class="g">002</span>.pdf</span></div><div style="left:1512.00px;top:1752.00px;width:1836.00px;height:2.00px;background:#e6e6e6"></div><div style="left:1512.00px;top:1754.00px;width:1836.00px;height:90.00px;background:#fefefe"></div><div style="left:2126.25px;top:1774.00px;width:142.50px;height:63.00px;background:#fefefe;border:2px solid #efefef;border-radius:18px;box-shadow:0 2px 3px rgba(0,0,0,.03)"></div><svg class="i" style="left:2146.50px;top:1789.75px;color:#8a8a8a;" width="32" height="32" viewBox="0 0 24 24" stroke-width="2"><path d="M9 14 4 9l5-5"/><path d="M4 9h10.5a5.5 5.5 0 0 1 5.5 5.5a5.5 5.5 0 0 1-5.5 5.5H11"/></svg><span class="t" style="left:2188.00px;top:1796.65px;font-size:22.5px;color:#8a8a8a;letter-spacing:0.084px;transform:scaleX(1.0900);-webkit-text-stroke:0.3px #8a8a8a;">Undo</span><div style="left:2287.00px;top:1774.00px;width:141.00px;height:63.00px;background:#fefefe;border:2px solid #efefef;border-radius:18px;box-shadow:0 2px 3px rgba(0,0,0,.03)"></div><svg class="i" style="left:2308.00px;top:1789.75px;color:#8a8a8a;" width="32" height="32" viewBox="0 0 24 24" stroke-width="2"><path d="m15 14 5-5-5-5"/><path d="M20 9H9.5A5.5 5.5 0 0 0 4 14.5A5.5 5.5 0 0 0 9.5 20H13"/></svg><span class="t" style="left:2349.50px;top:1796.65px;font-size:22.5px;color:#8a8a8a;transform:scaleX(1.0550);-webkit-text-stroke:0.3px #8a8a8a;">Redo</span><svg class="i" style="left:2464.80px;top:1789.75px;color:#111;" width="32" height="32" viewBox="0 0 24 24" stroke-width="2"><path d="M21 15v4a2 2 0 0 1-2 2H5a2 2 0 0 1-2-2v-4"/><polyline points="7 10 12 15 17 10"/><path d="M12 15V3"/></svg><span class="t" style="left:2506.25px;top:1796.65px;font-size:22.5px;color:#111;letter-spacing:0.678px;transform:scaleX(1.0900);-webkit-text-stroke:0.35px #111;">Export Script</span><svg class="i" style="left:2713.00px;top:1789.75px;color:#111;" width="32" height="32" viewBox="0 0 24 24" stroke-width="2"><path d="M15 2H6a2 2 0 0 0-2 2v16a2 2 0 0 0 2 2h12a2 2 0 0 0 2-2V7Z"/><path d="M14 2v4a2 2 0 0 0 2 2h4"/><path d="M10 9H8"/><path d="M16 13H8"/><path d="M16 17H8"/></svg><span class="t" style="left:2754.00px;top:1796.65px;font-size:22.5px;color:#111;letter-spacing:0.268px;transform:scaleX(1.0900);-webkit-text-stroke:0.35px #111;">Export Plan</span><div style="left:2921.00px;top:1770.00px;width:405.00px;height:72.00px;background:linear-gradient(105deg,#3562ee 0%,#5a55e8 55%,#7349e6 100%);border-radius:17px;box-shadow:0 4px 10px rgba(70,80,230,.22)"></div><svg class="i" style="left:2952.50px;top:1791.50px;color:#fff;" width="29" height="29" viewBox="0 0 24 24" stroke-width="2"><path d="M5 5a2 2 0 0 1 3.008-1.728l11.997 6.998a2 2 0 0 1 .003 3.458l-12 7A2 2 0 0 1 5 19z"/></svg><span class="t" style="left:2994.50px;top:1795.04px;font-size:25px;color:#fff;letter-spacing:0.769px;transform:scaleX(1.0900);-webkit-text-stroke:0.4px #fff;">Execute Rename (298)</span></div></body></html>
